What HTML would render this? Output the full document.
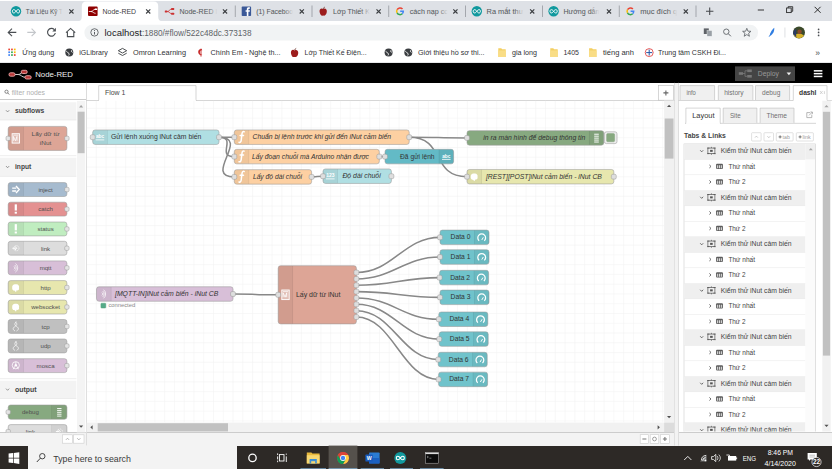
<!DOCTYPE html>
<html><head><meta charset="utf-8"><title>Node-RED</title>
<style>
html,body{margin:0;padding:0;background:#fff;}
body{width:834px;height:473px;overflow:hidden;position:relative;font-family:"Liberation Sans",sans-serif;}
#scr{position:absolute;left:0;top:0;width:831.8px;height:469.4px;overflow:hidden;background:#fff;}
.a{position:absolute;}
.t{position:absolute;white-space:nowrap;line-height:1;}
svg{position:absolute;overflow:visible;}
</style></head><body><div id="scr">

<div class="a" style="left:0;top:1px;width:100%;height:20.2px;background:#dee1e6"></div>
<div class="a" style="left:0;top:21.2px;width:100%;height:41.8px;background:#fff"></div>
<svg width="834" height="473" viewBox="0 0 834 473" font-family="Liberation Sans, sans-serif"><path d="M77.3 21.2 q4.5 0 4.5 -4.5 V6.0 q0 -4.5 4.5 -4.5 H153.7 q4.5 0 4.5 4.5 V16.7 q0 4.5 4.5 4.5 Z" fill="#fff"/><circle cx="16.0" cy="11.3" r="5.2" fill="#11999e"/><path d="M16.0 11.3 c-1.3 -2.2 -3.6 -2.2 -3.6 0 s2.3 2.2 3.6 0 s3.6 -2.2 3.6 0 s-2.3 2.2 -3.6 0" fill="none" stroke="#fff" stroke-width="1"/><linearGradient id="tf0" gradientUnits="userSpaceOnUse" x1="53.8" y1="0" x2="62.8" y2="0"><stop offset="0" stop-color="#50555a"/><stop offset="1" stop-color="#dee1e6"/></linearGradient><text x="25.8" y="14.27" font-size="7.8" fill="url(#tf0)" textLength="37" lengthAdjust="spacingAndGlyphs">Tài Liệu Kỹ T</text><path d="M69.3 9.3 l4.2 4.2 M73.49999999999999 9.3 l-4.2 4.2" stroke="#3a3d40" stroke-width="1.1" fill="none"/><rect x="88.0" y="6.500000000000001" width="9.6" height="9.6" rx="1" fill="#8f0000"/><path d="M88.8 11.5 h2.2 c2 0 2 -2.2 4.6 -2.2 M91.0 11.5 c2 0 2.2 1.8 4.6 1.8" fill="none" stroke="#fff" stroke-width="0.8"/><rect x="94.6" y="8.4" width="2.6" height="1.6" rx=".5" fill="#fff"/><text x="102.6" y="14.27" font-size="7.8" fill="#3c4043" font-weight="normal" font-style="normal" text-anchor="start" textLength="33.5" lengthAdjust="spacingAndGlyphs" >Node-RED</text><path d="M146.1 9.3 l4.2 4.2 M150.29999999999998 9.3 l-4.2 4.2" stroke="#3a3d40" stroke-width="1.1" fill="none"/><path d="M165.2 11.5 h2.2 c2 0 2 -2.4 4.6 -2.4 M167.4 11.5 c2 0 2.2 2.2 4.6 2.2" fill="none" stroke="#c33" stroke-width="0.9"/><rect x="171.2" y="8.100000000000001" width="3" height="1.9" rx=".5" fill="#c33"/><rect x="171.2" y="12.8" width="3" height="1.9" rx=".5" fill="#c33"/><rect x="164.79999999999998" y="10.5" width="2.6" height="1.9" rx=".5" fill="#c33"/><linearGradient id="tf2" gradientUnits="userSpaceOnUse" x1="208.4" y1="0" x2="217.4" y2="0"><stop offset="0" stop-color="#50555a"/><stop offset="1" stop-color="#dee1e6"/></linearGradient><text x="179.4" y="14.27" font-size="7.8" fill="url(#tf2)" textLength="38" lengthAdjust="spacingAndGlyphs">Node-RED I</text><path d="M222.9 9.3 l4.2 4.2 M227.1 9.3 l-4.2 4.2" stroke="#3a3d40" stroke-width="1.1" fill="none"/><rect x="234.85" y="5.5" width="0.7" height="11.5" fill="#8b8f94"/><rect x="241.7" y="6.6000000000000005" width="9.4" height="9.4" rx="0.8" fill="#3b5998"/><path d="M246.79999999999998 16.0 v-4.3 h-1.2 v-1.4 h1.2 v-1 c0 -1.4 .8 -2 2 -2 h1.1 v1.4 h-.8 c-.5 0 -.7 .2 -.7 .7 v.9 h1.5 l-.2 1.4 h-1.3 v4.3 z" fill="#fff"/><linearGradient id="tf3" gradientUnits="userSpaceOnUse" x1="284.2" y1="0" x2="293.2" y2="0"><stop offset="0" stop-color="#50555a"/><stop offset="1" stop-color="#dee1e6"/></linearGradient><text x="256.2" y="14.27" font-size="7.8" fill="url(#tf3)" textLength="37" lengthAdjust="spacingAndGlyphs">(1) Faceboo</text><path d="M299.69999999999993 9.3 l4.2 4.2 M303.9 9.3 l-4.2 4.2" stroke="#3a3d40" stroke-width="1.1" fill="none"/><rect x="311.65" y="5.5" width="0.7" height="11.5" fill="#8b8f94"/><path d="M323.2 9.100000000000001 c-2 -1.5 -4.2 .3 -3.6 3 c.5 2.4 1.8 4 3 3.6 c.4 -.15 .8 -.15 1.2 0 c1.4 .4 2.6 -1.4 3 -3.6 c.5 -2.8 -1.8 -4.4 -3.6 -3 z" fill="#9c1c1c"/><path d="M323.2 8.9 c.2 -1 .8 -1.6 1.6 -1.8" stroke="#5a1a10" stroke-width=".7" fill="none"/><linearGradient id="tf4" gradientUnits="userSpaceOnUse" x1="361.0" y1="0" x2="370.0" y2="0"><stop offset="0" stop-color="#50555a"/><stop offset="1" stop-color="#dee1e6"/></linearGradient><text x="333.0" y="14.27" font-size="7.8" fill="url(#tf4)" textLength="37" lengthAdjust="spacingAndGlyphs">Lớp Thiết K</text><path d="M376.5 9.3 l4.2 4.2 M380.70000000000005 9.3 l-4.2 4.2" stroke="#3a3d40" stroke-width="1.1" fill="none"/><rect x="388.45" y="5.5" width="0.7" height="11.5" fill="#8b8f94"/><g fill="none" stroke-width="1.5"><path d="M402.5 9.100000000000001 A3.3 3.3 0 0 0 397.1 9.700000000000001" stroke="#ea4335"/><path d="M397.1 9.700000000000001 A3.3 3.3 0 0 0 397.1 12.9" stroke="#fbbc05"/><path d="M397.1 12.9 A3.3 3.3 0 0 0 402.3 13.700000000000001" stroke="#34a853"/><path d="M402.3 13.700000000000001 A3.3 3.3 0 0 0 403.3 11.3 H400.2" stroke="#4285f4"/></g><linearGradient id="tf5" gradientUnits="userSpaceOnUse" x1="438.8" y1="0" x2="447.8" y2="0"><stop offset="0" stop-color="#50555a"/><stop offset="1" stop-color="#dee1e6"/></linearGradient><text x="409.8" y="14.27" font-size="7.8" fill="url(#tf5)" textLength="38" lengthAdjust="spacingAndGlyphs">cách nạp cc</text><path d="M453.29999999999995 9.3 l4.2 4.2 M457.5 9.3 l-4.2 4.2" stroke="#3a3d40" stroke-width="1.1" fill="none"/><rect x="465.25" y="5.5" width="0.7" height="11.5" fill="#8b8f94"/><circle cx="476.79999999999995" cy="11.3" r="5.2" fill="#11999e"/><path d="M476.79999999999995 11.3 c-1.3 -2.2 -3.6 -2.2 -3.6 0 s2.3 2.2 3.6 0 s3.6 -2.2 3.6 0 s-2.3 2.2 -3.6 0" fill="none" stroke="#fff" stroke-width="1"/><linearGradient id="tf6" gradientUnits="userSpaceOnUse" x1="514.5999999999999" y1="0" x2="523.5999999999999" y2="0"><stop offset="0" stop-color="#50555a"/><stop offset="1" stop-color="#dee1e6"/></linearGradient><text x="486.59999999999997" y="14.27" font-size="7.8" fill="url(#tf6)" textLength="37" lengthAdjust="spacingAndGlyphs">Ra mắt thư</text><path d="M530.0999999999999 9.3 l4.2 4.2 M534.3 9.3 l-4.2 4.2" stroke="#3a3d40" stroke-width="1.1" fill="none"/><rect x="542.05" y="5.5" width="0.7" height="11.5" fill="#8b8f94"/><circle cx="553.6" cy="11.3" r="5.2" fill="#11999e"/><path d="M553.6 11.3 c-1.3 -2.2 -3.6 -2.2 -3.6 0 s2.3 2.2 3.6 0 s3.6 -2.2 3.6 0 s-2.3 2.2 -3.6 0" fill="none" stroke="#fff" stroke-width="1"/><linearGradient id="tf7" gradientUnits="userSpaceOnUse" x1="590.4" y1="0" x2="599.4" y2="0"><stop offset="0" stop-color="#50555a"/><stop offset="1" stop-color="#dee1e6"/></linearGradient><text x="563.4" y="14.27" font-size="7.8" fill="url(#tf7)" textLength="36" lengthAdjust="spacingAndGlyphs">Hướng dẫn</text><path d="M606.9 9.3 l4.2 4.2 M611.1 9.3 l-4.2 4.2" stroke="#3a3d40" stroke-width="1.1" fill="none"/><rect x="618.8499999999999" y="5.5" width="0.7" height="11.5" fill="#8b8f94"/><g fill="none" stroke-width="1.5"><path d="M632.9 9.100000000000001 A3.3 3.3 0 0 0 627.5 9.700000000000001" stroke="#ea4335"/><path d="M627.5 9.700000000000001 A3.3 3.3 0 0 0 627.5 12.9" stroke="#fbbc05"/><path d="M627.5 12.9 A3.3 3.3 0 0 0 632.6999999999999 13.700000000000001" stroke="#34a853"/><path d="M632.6999999999999 13.700000000000001 A3.3 3.3 0 0 0 633.6999999999999 11.3 H630.6" stroke="#4285f4"/></g><linearGradient id="tf8" gradientUnits="userSpaceOnUse" x1="668.1999999999999" y1="0" x2="677.1999999999999" y2="0"><stop offset="0" stop-color="#50555a"/><stop offset="1" stop-color="#dee1e6"/></linearGradient><text x="640.1999999999999" y="14.27" font-size="7.8" fill="url(#tf8)" textLength="37" lengthAdjust="spacingAndGlyphs">mục đích q</text><path d="M683.6999999999999 9.3 l4.2 4.2 M687.9 9.3 l-4.2 4.2" stroke="#3a3d40" stroke-width="1.1" fill="none"/><rect x="695.6499999999999" y="5.5" width="0.7" height="11.5" fill="#8b8f94"/><path d="M706 11.3 h7.4 M709.7 7.6 v7.4" stroke="#45484c" stroke-width="1.05" fill="none"/><path d="M757.8 10 h6.2" stroke="#222" stroke-width="0.9"/><rect x="786.6" y="8" width="4.6" height="4.6" fill="none" stroke="#222" stroke-width="0.85"/><path d="M788.1 8 v-1.3 h4.6 v4.6 h-1.4" fill="none" stroke="#222" stroke-width="0.85"/><path d="M814.6 6.8 l6 6 M820.6 6.8 l-6 6" stroke="#222" stroke-width="0.95"/><path d="M16.3 32.4 H8.3 M12 28.599999999999998 l-3.8 3.8 l3.8 3.8" fill="none" stroke="#4a4e52" stroke-width="1.1"/><path d="M27.3 32.4 H35.3 M31.6 28.599999999999998 l3.8 3.8 l-3.8 3.8" fill="none" stroke="#c3c6ca" stroke-width="1.1"/><path d="M55.3 33.0 A3.9 3.9 0 1 1 54.3 29.599999999999998" fill="none" stroke="#4a4e52" stroke-width="1.15"/><path d="M55.9 27.799999999999997 v3.6 h-3.6 z" fill="#4a4e52"/><path d="M66 32.6 l4.6 -4.2 l4.6 4.2 M67.4 32.0 v4.6 h6.4 v-4.6" fill="none" stroke="#4a4e52" stroke-width="1.1" stroke-linejoin="miter"/><rect x="84.4" y="24.8" width="673.6" height="15.8" rx="7.9" fill="#f1f3f4"/><circle cx="94.5" cy="32.4" r="3.7" fill="none" stroke="#4a4e52" stroke-width="0.8"/><path d="M94.5 31.9 v2.6 M94.5 30.099999999999998 v0.9" stroke="#4a4e52" stroke-width="0.9"/><text x="104.5" y="35.52" font-size="8.5" fill="#202124" font-weight="normal" font-style="normal" text-anchor="start" textLength="37.5" lengthAdjust="spacingAndGlyphs" >localhost</text><text x="142" y="35.52" font-size="8.5" fill="#5f6368" font-weight="normal" font-style="normal" text-anchor="start" textLength="109.5" lengthAdjust="spacingAndGlyphs" >:1880/#flow/522c48dc.373138</text><rect x="703.8" y="28.4" width="5" height="5.6" fill="#5f6368"/><rect x="707" y="30.599999999999998" width="5" height="5.6" fill="#9aa0a6" stroke="#f1f3f4" stroke-width=".4"/><circle cx="726.3" cy="31.7" r="2.7" fill="none" stroke="#5f6368" stroke-width="0.9"/><path d="M728.3 33.699999999999996 l2.6 2.6" stroke="#5f6368" stroke-width="1"/><polygon points="746.80,28.30 747.92,31.16 750.98,31.34 748.61,33.29 749.39,36.26 746.80,34.60 744.21,36.26 744.99,33.29 742.62,31.34 745.68,31.16" fill="none" stroke="#5f6368" stroke-width="0.85"/><path d="M769.5 35.8 c1 -4 3 -6.5 4.8 -8 c.2 3.5 -1.3 6.3 -3.4 7.6 z" fill="#2f7de1"/><path d="M769 36.9 l2.5 -4" stroke="#2f7de1" stroke-width=".7"/><rect x="784.6" y="27.5" width="0.7" height="10" fill="#d0d3d7"/><circle cx="799" cy="32.4" r="6" fill="#3c4a2a"/><path d="M794 35.6 a6 6 0 0 0 10 0 q-5 -4 -10 0z" fill="#d8b32a"/><circle cx="799.6" cy="31.799999999999997" r="2.2" fill="#8a4a2a"/><path d="M793.2 33.4 a6 6 0 0 1 3 -5 v9 z" fill="#2a3a66"/><circle cx="818.6" cy="29.4" r="0.85" fill="#4a4e52"/><circle cx="818.6" cy="32.4" r="0.85" fill="#4a4e52"/><circle cx="818.6" cy="35.4" r="0.85" fill="#4a4e52"/><rect x="8.3" y="48.6" width="1.7" height="1.7" fill="#ea4335"/><rect x="11.100000000000001" y="48.6" width="1.7" height="1.7" fill="#ea4335"/><rect x="13.9" y="48.6" width="1.7" height="1.7" fill="#fbbc05"/><rect x="8.3" y="51.4" width="1.7" height="1.7" fill="#4285f4"/><rect x="11.100000000000001" y="51.4" width="1.7" height="1.7" fill="#34a853"/><rect x="13.9" y="51.4" width="1.7" height="1.7" fill="#fbbc05"/><rect x="8.3" y="54.2" width="1.7" height="1.7" fill="#4285f4"/><rect x="11.100000000000001" y="54.2" width="1.7" height="1.7" fill="#34a853"/><rect x="13.9" y="54.2" width="1.7" height="1.7" fill="#ea4335"/><text x="22.2" y="55.37" font-size="7.8" fill="#2f3235" font-weight="normal" font-style="normal" text-anchor="start" textLength="32" lengthAdjust="spacingAndGlyphs" >Ứng dụng</text><circle cx="69.3" cy="52.6" r="4" fill="#3a3d40"/><path d="M66.3 51.2 c1.5 .6 1.2 1.8 2.2 2 c1 .2 .8 1.4 .2 2.2 M71.89999999999999 50.2 c-1 .8 -.4 1.8 .6 2.2" fill="none" stroke="#fff" stroke-width=".9"/><text x="79.3" y="55.37" font-size="7.8" fill="#2f3235" font-weight="normal" font-style="normal" text-anchor="start" textLength="28.5" lengthAdjust="spacingAndGlyphs" >iGLibrary</text><path d="M122.5 48.4 l4.2 2.3 l-4.2 2.3 l-4.2 -2.3 z" fill="none" stroke="#3a3d40" stroke-width=".9"/><path d="M118.3 53.2 l4.2 2.3 l4.2 -2.3" fill="none" stroke="#3a3d40" stroke-width=".9"/><text x="133" y="55.37" font-size="7.8" fill="#2f3235" font-weight="normal" font-style="normal" text-anchor="start" textLength="53" lengthAdjust="spacingAndGlyphs" >Omron Learning</text><path d="M201.5 49.0 c-3.2 -.2 -4 3 -2.6 5 c1 1.4 2.6 1.6 3.4 .8 c-1.6 0 -2.6 -1.2 -2.4 -2.8 c.2 -1.4 1.2 -2 2.4 -1.8 z" fill="#c62828"/><path d="M201 48.6 v8" stroke="#c62828" stroke-width=".9"/><text x="210.5" y="55.37" font-size="7.8" fill="#2f3235" font-weight="normal" font-style="normal" text-anchor="start" textLength="70" lengthAdjust="spacingAndGlyphs" >Chính Em - Nghệ th...</text><path d="M294.6 50.4 c-2 -1.5 -4.2 .3 -3.6 3 c.5 2.4 1.8 4 3 3.6 c.4 -.15 .8 -.15 1.2 0 c1.4 .4 2.6 -1.4 3 -3.6 c.5 -2.8 -1.8 -4.4 -3.6 -3 z" fill="#9c1c1c"/><path d="M294.6 50.2 c.2 -1 .8 -1.6 1.6 -1.8" stroke="#5a1a10" stroke-width=".7" fill="none"/><text x="304.6" y="55.37" font-size="7.8" fill="#2f3235" font-weight="normal" font-style="normal" text-anchor="start" textLength="62" lengthAdjust="spacingAndGlyphs" >Lớp Thiết Kế Điện...</text><circle cx="388.6" cy="52.6" r="4" fill="#3a3d40"/><path d="M385.6 51.2 c1.5 .6 1.2 1.8 2.2 2 c1 .2 .8 1.4 .2 2.2 M391.20000000000005 50.2 c-1 .8 -.4 1.8 .6 2.2" fill="none" stroke="#fff" stroke-width=".9"/><circle cx="408.3" cy="52.6" r="4" fill="#3a3d40"/><path d="M405.3 51.2 c1.5 .6 1.2 1.8 2.2 2 c1 .2 .8 1.4 .2 2.2 M410.90000000000003 50.2 c-1 .8 -.4 1.8 .6 2.2" fill="none" stroke="#fff" stroke-width=".9"/><text x="418" y="55.37" font-size="7.8" fill="#2f3235" font-weight="normal" font-style="normal" text-anchor="start" textLength="66.5" lengthAdjust="spacingAndGlyphs" >Giới thiệu hồ sơ thi...</text><path d="M498.3 48.2 h3 l.8 1 h3.6 v7.8 h-7.4 z" fill="#f3cf63"/><rect x="498.3" y="50.4" width="7.4" height="6.6" fill="#f9dd86"/><text x="512" y="55.37" font-size="7.8" fill="#2f3235" font-weight="normal" font-style="normal" text-anchor="start" textLength="25" lengthAdjust="spacingAndGlyphs" >gia long</text><path d="M550.3 48.2 h3 l.8 1 h3.6 v7.8 h-7.4 z" fill="#f3cf63"/><rect x="550.3" y="50.4" width="7.4" height="6.6" fill="#f9dd86"/><text x="563.5" y="55.37" font-size="7.8" fill="#2f3235" font-weight="normal" font-style="normal" text-anchor="start" textLength="15.5" lengthAdjust="spacingAndGlyphs" >1405</text><path d="M589.0999999999999 48.2 h3 l.8 1 h3.6 v7.8 h-7.4 z" fill="#f3cf63"/><rect x="589.0999999999999" y="50.4" width="7.4" height="6.6" fill="#f9dd86"/><text x="603" y="55.37" font-size="7.8" fill="#2f3235" font-weight="normal" font-style="normal" text-anchor="start" textLength="31" lengthAdjust="spacingAndGlyphs" >tiếng anh</text><circle cx="649.2" cy="52.6" r="4" fill="#fff" stroke="#d33" stroke-width=".8"/><path d="M649.2 49.6 v6 M646.2 52.6 h6" stroke="#2456a6" stroke-width="1"/><text x="658" y="55.37" font-size="7.8" fill="#2f3235" font-weight="normal" font-style="normal" text-anchor="start" textLength="68" lengthAdjust="spacingAndGlyphs" >Trung tâm CSKH Đi...</text><text x="815.3" y="55.62" font-size="8.5" fill="#4a4e52" font-weight="normal" font-style="normal" text-anchor="start" >»</text><rect x="0" y="62.4" width="834" height="0.6" fill="#d5d8dc"/></svg>
<div class="a" style="left:0px;top:63.0px;width:831.8px;height:19.8px;background:#000;"></div>
<div class="a" style="left:0px;top:82.8px;width:831.8px;height:362.8px;background:#fff;"></div>
<div class="a" style="left:674.4px;top:82.8px;width:4.2px;height:362.8px;background:#f3f3f3;"></div>
<div class="a" style="left:0px;top:82.8px;width:86.4px;height:17.5px;background:#fff;border-bottom:0.6px solid #ccc;box-sizing:border-box"></div>
<div class="a" style="left:86.4px;top:82.8px;width:588.0px;height:17.5px;background:#fff;"></div>
<div class="a" style="left:0px;top:432.2px;width:86.4px;height:13.4px;background:#f3f3f3;border-top:0.6px solid #ccc;box-sizing:border-box"></div>
<div class="a" style="left:86.7px;top:432.2px;width:587.4px;height:13.4px;background:#f3f3f3;border-top:0.6px solid #ccc;box-sizing:border-box"></div>
<svg width="834" height="473" viewBox="0 0 834 473" font-family="Liberation Sans, sans-serif"><rect x="674.1" y="82.8" width="0.6" height="362.8" fill="#d4d4d4"/><rect x="678.3000000000001" y="82.8" width="0.6" height="362.8" fill="#d0d0d0"/><path d="M15 74.5 h3.2 c3 0 2.6 -2.6 6 -2.6 M18.2 74.5 c3 0 3.4 2.8 7 2.8" fill="none" stroke="#ccc" stroke-width="1"/><rect x="9" y="72.8" width="6" height="3.4" rx="1.5" fill="#b53535" stroke="#eaa8a8" stroke-width="0.9"/><rect x="21.2" y="70.3" width="6" height="3.2" rx="1.5" fill="#b53535" stroke="#eaa8a8" stroke-width="0.9"/><rect x="25" y="75.7" width="6.2" height="3.3" rx="1.5" fill="#b53535" stroke="#eaa8a8" stroke-width="0.9"/><text x="35.2" y="77.24" font-size="8" fill="#eee" font-weight="normal" font-style="normal" text-anchor="start" textLength="37.8" lengthAdjust="spacingAndGlyphs" >Node-RED</text><rect x="735" y="66.4" width="60" height="14.6" fill="#444"/><rect x="738.8" y="72.2" width="4.2" height="2.6" fill="#777"/><rect x="747.2" y="69.5" width="4.6" height="2.6" fill="#777"/><rect x="747.2" y="75" width="4.6" height="2.6" fill="#777"/><path d="M743 73.5 h2 v-2.7 h2.2 M745 73.5 v2.8 h2.2" fill="none" stroke="#777" stroke-width=".8"/><text x="757.8" y="76.35" font-size="6.9" fill="#999" font-weight="normal" font-style="normal" text-anchor="start" textLength="21" lengthAdjust="spacingAndGlyphs" >Deploy</text><path d="M786.6 72.6 h4.6 l-2.3 2.6 z" fill="#eee"/><rect x="813.8" y="70.1" width="8.6" height="1.5" fill="#fff"/><rect x="813.8" y="72.9" width="8.6" height="1.5" fill="#fff"/><rect x="813.8" y="75.7" width="8.6" height="1.5" fill="#fff"/><circle cx="6.5" cy="91.7" r="1.6" fill="none" stroke="#777" stroke-width=".9"/><path d="M7.6 92.9 l1.6 1.6" stroke="#777" stroke-width="1"/><text x="11.7" y="94.94" font-size="6.6" fill="#b0b0b0" font-weight="normal" font-style="normal" text-anchor="start" textLength="33.3" lengthAdjust="spacingAndGlyphs" >filter nodes</text><rect x="86.10000000000001" y="82.8" width="0.6" height="362.8" fill="#c4c4c4"/><rect x="86.4" y="100.0" width="588.0" height="0.6" fill="#bbb"/><path d="M98.7 100.7 V85.6 H196 V100.7" fill="#fff" stroke="#bbb" stroke-width="0.6"/><rect x="99" y="99.8" width="96.7" height="1.2" fill="#fff"/><text x="104.9" y="94.75" font-size="6.9" fill="#484848" font-weight="normal" font-style="normal" text-anchor="start" textLength="20.5" lengthAdjust="spacingAndGlyphs" >Flow 1</text><rect x="658.3" y="85.6" width="15.2" height="14.6" fill="#fff" stroke="#bbb" stroke-width="0.6"/><path d="M663.4 92.9 h5 M665.9 90.4 v5" stroke="#666" stroke-width="1.1"/><rect x="62.4" y="434.8" width="10.199999999999996" height="8.399999999999977" fill="#fff" stroke="#ccc" stroke-width="0.6"/><rect x="73.6" y="434.8" width="10.400000000000006" height="8.399999999999977" fill="#fff" stroke="#ccc" stroke-width="0.6"/><path d="M65.9 439.9 l1.6 -1.7 l1.6 1.7" fill="none" stroke="#999" stroke-width=".7"/><path d="M77.2 438.2 l1.6 1.7 l1.6 -1.7" fill="none" stroke="#999" stroke-width=".7"/><rect x="640.2" y="434.7" width="8.399999999999977" height="8.600000000000023" fill="#fff" stroke="#ccc" stroke-width="0.6"/><rect x="650.2" y="434.7" width="8.599999999999909" height="8.600000000000023" fill="#fff" stroke="#ccc" stroke-width="0.6"/><rect x="660.5" y="434.7" width="8.799999999999955" height="8.600000000000023" fill="#fff" stroke="#ccc" stroke-width="0.6"/><path d="M642.4 439 h4" stroke="#777" stroke-width="1"/><circle cx="654.5" cy="439" r="1.9" fill="none" stroke="#777" stroke-width=".7"/><path d="M662.9 439 h4 M664.9 437 v4" stroke="#777" stroke-width="1.1"/></svg>
<svg width="834" height="473" viewBox="0 0 834 473" font-family="Liberation Sans, sans-serif"><clipPath id="cp12"><rect x="86.7" y="100.6" width="577.4" height="322.0"/></clipPath><g clip-path="url(#cp12)"><path d="M96.30 100.6 V422.6 M106.07 100.6 V422.6 M115.83 100.6 V422.6 M125.60 100.6 V422.6 M135.36 100.6 V422.6 M145.13 100.6 V422.6 M154.90 100.6 V422.6 M164.66 100.6 V422.6 M174.43 100.6 V422.6 M184.19 100.6 V422.6 M193.96 100.6 V422.6 M203.73 100.6 V422.6 M213.49 100.6 V422.6 M223.26 100.6 V422.6 M233.02 100.6 V422.6 M242.79 100.6 V422.6 M252.56 100.6 V422.6 M262.32 100.6 V422.6 M272.09 100.6 V422.6 M281.85 100.6 V422.6 M291.62 100.6 V422.6 M301.39 100.6 V422.6 M311.15 100.6 V422.6 M320.92 100.6 V422.6 M330.68 100.6 V422.6 M340.45 100.6 V422.6 M350.22 100.6 V422.6 M359.98 100.6 V422.6 M369.75 100.6 V422.6 M379.51 100.6 V422.6 M389.28 100.6 V422.6 M399.05 100.6 V422.6 M408.81 100.6 V422.6 M418.58 100.6 V422.6 M428.34 100.6 V422.6 M438.11 100.6 V422.6 M447.88 100.6 V422.6 M457.64 100.6 V422.6 M467.41 100.6 V422.6 M477.17 100.6 V422.6 M486.94 100.6 V422.6 M496.71 100.6 V422.6 M506.47 100.6 V422.6 M516.24 100.6 V422.6 M526.00 100.6 V422.6 M535.77 100.6 V422.6 M545.54 100.6 V422.6 M555.30 100.6 V422.6 M565.07 100.6 V422.6 M574.83 100.6 V422.6 M584.60 100.6 V422.6 M594.37 100.6 V422.6 M604.13 100.6 V422.6 M613.90 100.6 V422.6 M623.66 100.6 V422.6 M633.43 100.6 V422.6 M643.20 100.6 V422.6 M652.96 100.6 V422.6 M662.73 100.6 V422.6 M86.7 108.40 H664.1 M86.7 118.17 H664.1 M86.7 127.93 H664.1 M86.7 137.70 H664.1 M86.7 147.46 H664.1 M86.7 157.23 H664.1 M86.7 167.00 H664.1 M86.7 176.76 H664.1 M86.7 186.53 H664.1 M86.7 196.29 H664.1 M86.7 206.06 H664.1 M86.7 215.83 H664.1 M86.7 225.59 H664.1 M86.7 235.36 H664.1 M86.7 245.12 H664.1 M86.7 254.89 H664.1 M86.7 264.66 H664.1 M86.7 274.42 H664.1 M86.7 284.19 H664.1 M86.7 293.95 H664.1 M86.7 303.72 H664.1 M86.7 313.49 H664.1 M86.7 323.25 H664.1 M86.7 333.02 H664.1 M86.7 342.78 H664.1 M86.7 352.55 H664.1 M86.7 362.32 H664.1 M86.7 372.08 H664.1 M86.7 381.85 H664.1 M86.7 391.61 H664.1 M86.7 401.38 H664.1 M86.7 411.15 H664.1 M86.7 420.91 H664.1" stroke="#f2f2f2" stroke-width="0.55" fill="none"/><path d="M219.00 137.20 C230.47 137.20 222.83 137.20 234.30 137.20" fill="none" stroke="#fff" stroke-width="2.4"/><path d="M219.00 137.20 C237.53 137.20 215.77 156.60 234.30 156.60" fill="none" stroke="#fff" stroke-width="2.4"/><path d="M219.00 137.20 C250.91 137.20 202.39 176.90 234.30 176.90" fill="none" stroke="#fff" stroke-width="2.4"/><path d="M409.20 137.20 C445.82 137.20 430.38 137.90 467.00 137.90" fill="none" stroke="#fff" stroke-width="2.4"/><path d="M409.20 137.20 C445.82 137.20 430.38 176.70 467.00 176.70" fill="none" stroke="#fff" stroke-width="2.4"/><path d="M379.30 156.60 C383.57 156.60 380.73 156.60 385.00 156.60" fill="none" stroke="#fff" stroke-width="2.4"/><path d="M311.60 176.90 C320.17 176.90 314.43 176.20 323.00 176.20" fill="none" stroke="#fff" stroke-width="2.4"/><path d="M233.00 294.00 C266.91 294.00 244.29 294.80 278.20 294.80" fill="none" stroke="#fff" stroke-width="2.4"/><path d="M356.40 272.57 C393.02 272.57 403.38 237.35 440.00 237.35" fill="none" stroke="#fff" stroke-width="2.4"/><path d="M356.40 278.92 C393.02 278.92 403.38 257.00 440.00 257.00" fill="none" stroke="#fff" stroke-width="2.4"/><path d="M356.40 285.27 C393.02 285.27 402.98 277.60 439.60 277.60" fill="none" stroke="#fff" stroke-width="2.4"/><path d="M356.40 291.62 C393.02 291.62 403.38 297.35 440.00 297.35" fill="none" stroke="#fff" stroke-width="2.4"/><path d="M356.40 297.97 C393.02 297.97 402.18 319.25 438.80 319.25" fill="none" stroke="#fff" stroke-width="2.4"/><path d="M356.40 304.32 C393.02 304.32 402.58 339.10 439.20 339.10" fill="none" stroke="#fff" stroke-width="2.4"/><path d="M356.40 310.67 C393.02 310.67 401.58 359.55 438.20 359.55" fill="none" stroke="#fff" stroke-width="2.4"/><path d="M356.40 317.02 C393.02 317.02 401.98 379.40 438.60 379.40" fill="none" stroke="#fff" stroke-width="2.4"/><path d="M219.00 137.20 C230.47 137.20 222.83 137.20 234.30 137.20" fill="none" stroke="#888" stroke-width="1.55"/><path d="M219.00 137.20 C237.53 137.20 215.77 156.60 234.30 156.60" fill="none" stroke="#888" stroke-width="1.55"/><path d="M219.00 137.20 C250.91 137.20 202.39 176.90 234.30 176.90" fill="none" stroke="#888" stroke-width="1.55"/><path d="M409.20 137.20 C445.82 137.20 430.38 137.90 467.00 137.90" fill="none" stroke="#888" stroke-width="1.55"/><path d="M409.20 137.20 C445.82 137.20 430.38 176.70 467.00 176.70" fill="none" stroke="#888" stroke-width="1.55"/><path d="M379.30 156.60 C383.57 156.60 380.73 156.60 385.00 156.60" fill="none" stroke="#888" stroke-width="1.55"/><path d="M311.60 176.90 C320.17 176.90 314.43 176.20 323.00 176.20" fill="none" stroke="#888" stroke-width="1.55"/><path d="M233.00 294.00 C266.91 294.00 244.29 294.80 278.20 294.80" fill="none" stroke="#888" stroke-width="1.55"/><path d="M356.40 272.57 C393.02 272.57 403.38 237.35 440.00 237.35" fill="none" stroke="#888" stroke-width="1.55"/><path d="M356.40 278.92 C393.02 278.92 403.38 257.00 440.00 257.00" fill="none" stroke="#888" stroke-width="1.55"/><path d="M356.40 285.27 C393.02 285.27 402.98 277.60 439.60 277.60" fill="none" stroke="#888" stroke-width="1.55"/><path d="M356.40 291.62 C393.02 291.62 403.38 297.35 440.00 297.35" fill="none" stroke="#888" stroke-width="1.55"/><path d="M356.40 297.97 C393.02 297.97 402.18 319.25 438.80 319.25" fill="none" stroke="#888" stroke-width="1.55"/><path d="M356.40 304.32 C393.02 304.32 402.58 339.10 439.20 339.10" fill="none" stroke="#888" stroke-width="1.55"/><path d="M356.40 310.67 C393.02 310.67 401.58 359.55 438.20 359.55" fill="none" stroke="#888" stroke-width="1.55"/><path d="M356.40 317.02 C393.02 317.02 401.98 379.40 438.60 379.40" fill="none" stroke="#888" stroke-width="1.55"/><rect x="92.7" y="129.95" width="126.3" height="14.5" rx="2.4" fill="#b0dfe3" stroke="#999" stroke-width="0.55"/><path d="M95.10000000000001 130.25 h12.2 v13.9 h-12.2 a2.4 2.4 0 0 1 -2.4 -2.4 v-9.1 a2.4 2.4 0 0 1 2.4 -2.4 z" fill="#000" opacity=".05"/><rect x="107.05" y="130.25" width="0.5" height="13.9" fill="#000" opacity=".12"/><text x="100.0" y="138.39999999999998" font-size="5" font-weight="bold" fill="#fff" text-anchor="middle" textLength="8.2" lengthAdjust="spacingAndGlyphs">abc</text><rect x="95.7" y="139.5" width="8.6" height="0.8" fill="#fff"/><text x="111" y="139.22" font-size="7.1" fill="#333" font-weight="normal" font-style="normal" text-anchor="start" textLength="90.3" lengthAdjust="spacingAndGlyphs" >Gửi lệnh xuống iNut cảm biến</text><rect x="90.25" y="134.75" width="4.9" height="4.9" rx="1.5" fill="#dedede" stroke="#999" stroke-width="0.5"/><rect x="216.55" y="134.75" width="4.9" height="4.9" rx="1.5" fill="#dedede" stroke="#999" stroke-width="0.5"/><rect x="234.3" y="129.95" width="174.9" height="14.5" rx="2.4" fill="#fdd0a2" stroke="#999" stroke-width="0.55"/><path d="M236.70000000000002 130.25 h12.2 v13.9 h-12.2 a2.4 2.4 0 0 1 -2.4 -2.4 v-9.1 a2.4 2.4 0 0 1 2.4 -2.4 z" fill="#000" opacity=".05"/><rect x="248.65" y="130.25" width="0.5" height="13.9" fill="#000" opacity=".12"/><path d="M239.00000000000003 142.29999999999998 c1.3 .5 2 -.5 2.2 -2 l.8 -6.6 c.2 -1.5 .9 -2.5 2.2 -2 M240.10000000000002 135.6 h3.4" fill="none" stroke="#fff" stroke-width="1.5" stroke-linecap="round"/><text x="252.5" y="139.22" font-size="7.1" fill="#333" font-weight="normal" font-style="italic" text-anchor="start" textLength="138.6" lengthAdjust="spacingAndGlyphs" >Chuẩn bị lệnh trước khi gửi đến iNut cảm biến</text><rect x="231.85" y="134.75" width="4.9" height="4.9" rx="1.5" fill="#dedede" stroke="#999" stroke-width="0.5"/><rect x="406.75" y="134.75" width="4.9" height="4.9" rx="1.5" fill="#dedede" stroke="#999" stroke-width="0.5"/><rect x="234.3" y="149.35" width="145.0" height="14.5" rx="2.4" fill="#fdd0a2" stroke="#999" stroke-width="0.55"/><path d="M236.70000000000002 149.65 h12.2 v13.9 h-12.2 a2.4 2.4 0 0 1 -2.4 -2.4 v-9.1 a2.4 2.4 0 0 1 2.4 -2.4 z" fill="#000" opacity=".05"/><rect x="248.65" y="149.65" width="0.5" height="13.9" fill="#000" opacity=".12"/><path d="M239.00000000000003 161.7 c1.3 .5 2 -.5 2.2 -2 l.8 -6.6 c.2 -1.5 .9 -2.5 2.2 -2 M240.10000000000002 155.0 h3.4" fill="none" stroke="#fff" stroke-width="1.5" stroke-linecap="round"/><text x="251.9" y="158.62" font-size="7.1" fill="#333" font-weight="normal" font-style="italic" text-anchor="start" textLength="117" lengthAdjust="spacingAndGlyphs" >Lấy đoạn chuỗi mà Arduino nhận được</text><rect x="231.85" y="154.15" width="4.9" height="4.9" rx="1.5" fill="#dedede" stroke="#999" stroke-width="0.5"/><rect x="376.85" y="154.15" width="4.9" height="4.9" rx="1.5" fill="#dedede" stroke="#999" stroke-width="0.5"/><rect x="234.3" y="169.65" width="77.3" height="14.5" rx="2.4" fill="#fdd0a2" stroke="#999" stroke-width="0.55"/><path d="M236.70000000000002 169.95000000000002 h12.2 v13.9 h-12.2 a2.4 2.4 0 0 1 -2.4 -2.4 v-9.1 a2.4 2.4 0 0 1 2.4 -2.4 z" fill="#000" opacity=".05"/><rect x="248.65" y="169.95000000000002" width="0.5" height="13.9" fill="#000" opacity=".12"/><path d="M239.00000000000003 182.0 c1.3 .5 2 -.5 2.2 -2 l.8 -6.6 c.2 -1.5 .9 -2.5 2.2 -2 M240.10000000000002 175.3 h3.4" fill="none" stroke="#fff" stroke-width="1.5" stroke-linecap="round"/><text x="252.9" y="178.92" font-size="7.1" fill="#333" font-weight="normal" font-style="italic" text-anchor="start" textLength="49" lengthAdjust="spacingAndGlyphs" >Lấy độ dài chuỗi</text><rect x="231.85" y="174.45" width="4.9" height="4.9" rx="1.5" fill="#dedede" stroke="#999" stroke-width="0.5"/><rect x="309.15" y="174.45" width="4.9" height="4.9" rx="1.5" fill="#dedede" stroke="#999" stroke-width="0.5"/><rect x="385" y="149.35" width="68.6" height="14.5" rx="2.4" fill="#63bac6" stroke="#999" stroke-width="0.55"/><path d="M439.0 149.65 h12.2 a2.4 2.4 0 0 1 2.4 2.4 v9.1 a2.4 2.4 0 0 1 -2.4 2.4 h-12.2 z" fill="#000" opacity=".05"/><rect x="438.75" y="149.65" width="0.5" height="13.9" fill="#000" opacity=".12"/><text x="446.3" y="157.79999999999998" font-size="5" font-weight="bold" fill="#fff" text-anchor="middle" textLength="8.2" lengthAdjust="spacingAndGlyphs">abc</text><rect x="442.0" y="158.9" width="8.6" height="0.8" fill="#fff"/><text x="434.6" y="158.62" font-size="7.1" fill="#333" font-weight="normal" font-style="normal" text-anchor="end" textLength="34.6" lengthAdjust="spacingAndGlyphs" >Đã gửi lệnh</text><rect x="382.55" y="154.15" width="4.9" height="4.9" rx="1.5" fill="#dedede" stroke="#999" stroke-width="0.5"/><rect x="323" y="168.95" width="68.4" height="14.5" rx="2.4" fill="#b0dfe3" stroke="#999" stroke-width="0.55"/><path d="M325.4 169.25 h12.2 v13.9 h-12.2 a2.4 2.4 0 0 1 -2.4 -2.4 v-9.1 a2.4 2.4 0 0 1 2.4 -2.4 z" fill="#000" opacity=".05"/><rect x="337.35" y="169.25" width="0.5" height="13.9" fill="#000" opacity=".12"/><text x="330.3" y="177.39999999999998" font-size="5" font-weight="bold" fill="#fff" text-anchor="middle" textLength="8.2" lengthAdjust="spacingAndGlyphs">123</text><rect x="326.0" y="178.5" width="8.6" height="0.8" fill="#fff"/><text x="342.4" y="178.22" font-size="7.1" fill="#333" font-weight="normal" font-style="italic" text-anchor="start" textLength="38.3" lengthAdjust="spacingAndGlyphs" >Độ dài chuỗi</text><rect x="320.55" y="173.75" width="4.9" height="4.9" rx="1.5" fill="#dedede" stroke="#999" stroke-width="0.5"/><rect x="388.95" y="173.75" width="4.9" height="4.9" rx="1.5" fill="#dedede" stroke="#999" stroke-width="0.5"/><rect x="467" y="130.65" width="136.8" height="14.5" rx="2.4" fill="#87a980" stroke="#999" stroke-width="0.55"/><path d="M589.1999999999999 130.95000000000002 h12.2 a2.4 2.4 0 0 1 2.4 2.4 v9.1 a2.4 2.4 0 0 1 -2.4 2.4 h-12.2 z" fill="#000" opacity=".05"/><rect x="588.9499999999999" y="130.95000000000002" width="0.5" height="13.9" fill="#000" opacity=".12"/><rect x="594.2" y="133.70000000000002" width="4.6" height="1.05" fill="#fff" opacity=".9"/><rect x="594.2" y="135.65" width="4.6" height="1.05" fill="#fff" opacity=".9"/><rect x="594.2" y="137.60000000000002" width="4.6" height="1.05" fill="#fff" opacity=".9"/><rect x="594.2" y="139.55" width="4.6" height="1.05" fill="#fff" opacity=".9"/><rect x="594.2" y="141.50000000000003" width="4.6" height="1.05" fill="#fff" opacity=".9"/><text x="585.3" y="139.92" font-size="7.1" fill="#333" font-weight="normal" font-style="italic" text-anchor="end" textLength="102" lengthAdjust="spacingAndGlyphs" >in ra màn hình để debug thông tin</text><rect x="464.55" y="135.45" width="4.9" height="4.9" rx="1.5" fill="#dedede" stroke="#999" stroke-width="0.5"/><rect x="604.4" y="131.8" width="12.6" height="11.8" rx="2" fill="#eee" stroke="#999" stroke-width=".55"/><rect x="606.6" y="133.6" width="8" height="8.2" rx="1.2" fill="#87a980" stroke="#7a9a74" stroke-width=".4"/><rect x="467" y="169.45" width="146.8" height="14.5" rx="2.4" fill="#e7e7ae" stroke="#999" stroke-width="0.55"/><path d="M469.4 169.75 h12.2 v13.9 h-12.2 a2.4 2.4 0 0 1 -2.4 -2.4 v-9.1 a2.4 2.4 0 0 1 2.4 -2.4 z" fill="#000" opacity=".05"/><rect x="481.35" y="169.75" width="0.5" height="13.9" fill="#000" opacity=".12"/><path d="M470.7 177.1 c-.4 -2.6 1.6 -4 3.4 -3.6 c2.4 -.6 4.2 1.6 3.4 3.6 c.6 1.8 -1 3 -2.4 2.4 l-.6 1.8 l-1.6 -1.6 c-1.4 .2 -2.4 -1 -2.2 -2.6 z" fill="#fff"/><text x="485.9" y="178.72" font-size="7.1" fill="#333" font-weight="normal" font-style="italic" text-anchor="start" textLength="116" lengthAdjust="spacingAndGlyphs" >[REST][POST]iNut cảm biến - iNut CB</text><rect x="464.55" y="174.25" width="4.9" height="4.9" rx="1.5" fill="#dedede" stroke="#999" stroke-width="0.5"/><rect x="611.35" y="174.25" width="4.9" height="4.9" rx="1.5" fill="#dedede" stroke="#999" stroke-width="0.5"/><rect x="96.5" y="286.75" width="136.5" height="14.5" rx="2.4" fill="#d8bfd8" stroke="#999" stroke-width="0.55"/><path d="M98.9 287.05 h12.2 v13.9 h-12.2 a2.4 2.4 0 0 1 -2.4 -2.4 v-9.1 a2.4 2.4 0 0 1 2.4 -2.4 z" fill="#000" opacity=".05"/><rect x="110.85" y="287.05" width="0.5" height="13.9" fill="#000" opacity=".12"/><path d="M101.92 292.56 a1.6 1.7600000000000002 0 0 1 0 2.8800000000000003" fill="none" stroke="#fff" stroke-width=".8" opacity=".95"/><path d="M102.74 291.12 a3.2 3.5200000000000005 0 0 1 0 5.760000000000001" fill="none" stroke="#fff" stroke-width=".8" opacity=".95"/><path d="M103.56 289.68 a4.8 5.28 0 0 1 0 8.64" fill="none" stroke="#fff" stroke-width=".8" opacity=".95"/><text x="115" y="296.02" font-size="7.1" fill="#333" font-weight="normal" font-style="italic" text-anchor="start" textLength="103.3" lengthAdjust="spacingAndGlyphs" >[MQTT-IN]iNut cảm biến - iNut CB</text><rect x="230.55" y="291.55" width="4.9" height="4.9" rx="1.5" fill="#dedede" stroke="#999" stroke-width="0.5"/><rect x="100.9" y="303.2" width="4.9" height="4.9" rx="0.8" fill="#5a8" stroke="#4a9a70" stroke-width=".4"/><text x="108.4" y="307.44" font-size="4.9" fill="#888" font-weight="normal" font-style="normal" text-anchor="start" textLength="26.8" lengthAdjust="spacingAndGlyphs" >connected</text><rect x="278.2" y="265.7" width="78.2" height="58.2" rx="2.4" fill="#dda596" stroke="#999" stroke-width="0.55"/><path d="M280.59999999999997 266.0 h12.2 v57.6 h-12.2 a2.4 2.4 0 0 1 -2.4 -2.4 v-52.8 a2.4 2.4 0 0 1 2.4 -2.4 z" fill="#000" opacity=".05"/><rect x="292.55" y="266.0" width="0.5" height="57.6" fill="#000" opacity=".12"/><rect x="281.8" y="289.99999999999994" width="7.4" height="9.6" fill="#fff" fill-opacity=".35" stroke="#fff" stroke-width=".9"/><path d="M283.1 297.19999999999993 v-4.4 l2 4.4 l1.6 -4.4 v4.4" fill="none" stroke="#fff" stroke-width=".8"/><path d="M283.0 291.59999999999997 h5" stroke="#fff" stroke-width=".7"/><text x="295.9" y="296.82" font-size="7.1" fill="#333" font-weight="normal" font-style="normal" text-anchor="start" textLength="44.5" lengthAdjust="spacingAndGlyphs" >Lấy dữ từ iNut</text><rect x="275.75" y="292.35" width="4.9" height="4.9" rx="1.5" fill="#dedede" stroke="#999" stroke-width="0.5"/><rect x="353.95" y="270.12" width="4.9" height="4.9" rx="1.5" fill="#dedede" stroke="#999" stroke-width="0.5"/><rect x="353.95" y="276.47" width="4.9" height="4.9" rx="1.5" fill="#dedede" stroke="#999" stroke-width="0.5"/><rect x="353.95" y="282.82" width="4.9" height="4.9" rx="1.5" fill="#dedede" stroke="#999" stroke-width="0.5"/><rect x="353.95" y="289.17" width="4.9" height="4.9" rx="1.5" fill="#dedede" stroke="#999" stroke-width="0.5"/><rect x="353.95" y="295.52" width="4.9" height="4.9" rx="1.5" fill="#dedede" stroke="#999" stroke-width="0.5"/><rect x="353.95" y="301.87" width="4.9" height="4.9" rx="1.5" fill="#dedede" stroke="#999" stroke-width="0.5"/><rect x="353.95" y="308.22" width="4.9" height="4.9" rx="1.5" fill="#dedede" stroke="#999" stroke-width="0.5"/><rect x="353.95" y="314.57" width="4.9" height="4.9" rx="1.5" fill="#dedede" stroke="#999" stroke-width="0.5"/><rect x="440" y="230.1" width="49" height="14.5" rx="2.4" fill="#70c3cb" stroke="#999" stroke-width="0.55"/><path d="M474.4 230.4 h12.2 a2.4 2.4 0 0 1 2.4 2.4 v9.1 a2.4 2.4 0 0 1 -2.4 2.4 h-12.2 z" fill="#000" opacity=".05"/><rect x="474.15" y="230.4" width="0.5" height="13.9" fill="#000" opacity=".12"/><path d="M479.09999999999997 240.75 a3.9 3.9 0 1 1 5.2 0" fill="none" stroke="#fff" stroke-width="1.25"/><path d="M481.8 239.95 l1.5 -2.6" stroke="#fff" stroke-width="1"/><text x="470.4" y="239.37" font-size="7.1" fill="#333" font-weight="normal" font-style="normal" text-anchor="end" textLength="19.8" lengthAdjust="spacingAndGlyphs" >Data 0</text><rect x="437.55" y="234.90" width="4.9" height="4.9" rx="1.5" fill="#dedede" stroke="#999" stroke-width="0.5"/><rect x="440" y="249.75" width="49" height="14.5" rx="2.4" fill="#70c3cb" stroke="#999" stroke-width="0.55"/><path d="M474.4 250.05 h12.2 a2.4 2.4 0 0 1 2.4 2.4 v9.1 a2.4 2.4 0 0 1 -2.4 2.4 h-12.2 z" fill="#000" opacity=".05"/><rect x="474.15" y="250.05" width="0.5" height="13.9" fill="#000" opacity=".12"/><path d="M479.09999999999997 260.4 a3.9 3.9 0 1 1 5.2 0" fill="none" stroke="#fff" stroke-width="1.25"/><path d="M481.8 259.6 l1.5 -2.6" stroke="#fff" stroke-width="1"/><text x="470.4" y="259.02" font-size="7.1" fill="#333" font-weight="normal" font-style="normal" text-anchor="end" textLength="19.8" lengthAdjust="spacingAndGlyphs" >Data 1</text><rect x="437.55" y="254.55" width="4.9" height="4.9" rx="1.5" fill="#dedede" stroke="#999" stroke-width="0.5"/><rect x="439.6" y="270.35" width="49.0" height="14.5" rx="2.4" fill="#70c3cb" stroke="#999" stroke-width="0.55"/><path d="M474.0 270.65000000000003 h12.2 a2.4 2.4 0 0 1 2.4 2.4 v9.1 a2.4 2.4 0 0 1 -2.4 2.4 h-12.2 z" fill="#000" opacity=".05"/><rect x="473.75" y="270.65000000000003" width="0.5" height="13.9" fill="#000" opacity=".12"/><path d="M478.7 281.0 a3.9 3.9 0 1 1 5.2 0" fill="none" stroke="#fff" stroke-width="1.25"/><path d="M481.40000000000003 280.20000000000005 l1.5 -2.6" stroke="#fff" stroke-width="1"/><text x="470.0" y="279.62" font-size="7.1" fill="#333" font-weight="normal" font-style="normal" text-anchor="end" textLength="19.8" lengthAdjust="spacingAndGlyphs" >Data 2</text><rect x="437.15" y="275.15" width="4.9" height="4.9" rx="1.5" fill="#dedede" stroke="#999" stroke-width="0.5"/><rect x="440" y="290.1" width="49" height="14.5" rx="2.4" fill="#70c3cb" stroke="#999" stroke-width="0.55"/><path d="M474.4 290.40000000000003 h12.2 a2.4 2.4 0 0 1 2.4 2.4 v9.1 a2.4 2.4 0 0 1 -2.4 2.4 h-12.2 z" fill="#000" opacity=".05"/><rect x="474.15" y="290.40000000000003" width="0.5" height="13.9" fill="#000" opacity=".12"/><path d="M479.09999999999997 300.75 a3.9 3.9 0 1 1 5.2 0" fill="none" stroke="#fff" stroke-width="1.25"/><path d="M481.8 299.95000000000005 l1.5 -2.6" stroke="#fff" stroke-width="1"/><text x="470.4" y="299.37" font-size="7.1" fill="#333" font-weight="normal" font-style="normal" text-anchor="end" textLength="19.8" lengthAdjust="spacingAndGlyphs" >Data 3</text><rect x="437.55" y="294.90" width="4.9" height="4.9" rx="1.5" fill="#dedede" stroke="#999" stroke-width="0.5"/><rect x="438.8" y="312.0" width="49.0" height="14.5" rx="2.4" fill="#70c3cb" stroke="#999" stroke-width="0.55"/><path d="M473.2 312.3 h12.2 a2.4 2.4 0 0 1 2.4 2.4 v9.1 a2.4 2.4 0 0 1 -2.4 2.4 h-12.2 z" fill="#000" opacity=".05"/><rect x="472.95" y="312.3" width="0.5" height="13.9" fill="#000" opacity=".12"/><path d="M477.9 322.65 a3.9 3.9 0 1 1 5.2 0" fill="none" stroke="#fff" stroke-width="1.25"/><path d="M480.6 321.85 l1.5 -2.6" stroke="#fff" stroke-width="1"/><text x="469.2" y="321.27" font-size="7.1" fill="#333" font-weight="normal" font-style="normal" text-anchor="end" textLength="19.8" lengthAdjust="spacingAndGlyphs" >Data 4</text><rect x="436.35" y="316.80" width="4.9" height="4.9" rx="1.5" fill="#dedede" stroke="#999" stroke-width="0.5"/><rect x="439.2" y="331.85" width="49.0" height="14.5" rx="2.4" fill="#70c3cb" stroke="#999" stroke-width="0.55"/><path d="M473.59999999999997 332.15000000000003 h12.2 a2.4 2.4 0 0 1 2.4 2.4 v9.1 a2.4 2.4 0 0 1 -2.4 2.4 h-12.2 z" fill="#000" opacity=".05"/><rect x="473.34999999999997" y="332.15000000000003" width="0.5" height="13.9" fill="#000" opacity=".12"/><path d="M478.29999999999995 342.5 a3.9 3.9 0 1 1 5.2 0" fill="none" stroke="#fff" stroke-width="1.25"/><path d="M481.0 341.70000000000005 l1.5 -2.6" stroke="#fff" stroke-width="1"/><text x="469.59999999999997" y="341.12" font-size="7.1" fill="#333" font-weight="normal" font-style="normal" text-anchor="end" textLength="19.8" lengthAdjust="spacingAndGlyphs" >Data 5</text><rect x="436.75" y="336.65" width="4.9" height="4.9" rx="1.5" fill="#dedede" stroke="#999" stroke-width="0.5"/><rect x="438.2" y="352.3" width="49.0" height="14.5" rx="2.4" fill="#70c3cb" stroke="#999" stroke-width="0.55"/><path d="M472.59999999999997 352.6 h12.2 a2.4 2.4 0 0 1 2.4 2.4 v9.1 a2.4 2.4 0 0 1 -2.4 2.4 h-12.2 z" fill="#000" opacity=".05"/><rect x="472.34999999999997" y="352.6" width="0.5" height="13.9" fill="#000" opacity=".12"/><path d="M477.29999999999995 362.95 a3.9 3.9 0 1 1 5.2 0" fill="none" stroke="#fff" stroke-width="1.25"/><path d="M480.0 362.15000000000003 l1.5 -2.6" stroke="#fff" stroke-width="1"/><text x="468.59999999999997" y="361.57" font-size="7.1" fill="#333" font-weight="normal" font-style="normal" text-anchor="end" textLength="19.8" lengthAdjust="spacingAndGlyphs" >Data 6</text><rect x="435.75" y="357.10" width="4.9" height="4.9" rx="1.5" fill="#dedede" stroke="#999" stroke-width="0.5"/><rect x="438.6" y="372.15" width="49.0" height="14.5" rx="2.4" fill="#70c3cb" stroke="#999" stroke-width="0.55"/><path d="M473.0 372.45 h12.2 a2.4 2.4 0 0 1 2.4 2.4 v9.1 a2.4 2.4 0 0 1 -2.4 2.4 h-12.2 z" fill="#000" opacity=".05"/><rect x="472.75" y="372.45" width="0.5" height="13.9" fill="#000" opacity=".12"/><path d="M477.7 382.79999999999995 a3.9 3.9 0 1 1 5.2 0" fill="none" stroke="#fff" stroke-width="1.25"/><path d="M480.40000000000003 382.0 l1.5 -2.6" stroke="#fff" stroke-width="1"/><text x="469.0" y="381.42" font-size="7.1" fill="#333" font-weight="normal" font-style="normal" text-anchor="end" textLength="19.8" lengthAdjust="spacingAndGlyphs" >Data 7</text><rect x="436.15" y="376.95" width="4.9" height="4.9" rx="1.5" fill="#dedede" stroke="#999" stroke-width="0.5"/></g></svg>
<svg width="834" height="473" viewBox="0 0 834 473" font-family="Liberation Sans, sans-serif"><rect x="664.1" y="100.6" width="10.0" height="322.0" fill="#f1f1f1"/><rect x="664.7" y="118.5" width="8.8" height="40.099999999999994" fill="#c1c1c1"/><path d="M669.1 104.8 l2.1 2.3 h-4.2 z" fill="#505050"/><path d="M669.1 418.20000000000005 l2.1 -2.3 h-4.2 z" fill="#505050"/><rect x="86.7" y="422.6" width="577.4" height="9.399999999999977" fill="#f1f1f1"/><rect x="97.7" y="423.20000000000005" width="130.3" height="8.199999999999978" fill="#c1c1c1"/><path d="M90.3 427.3 l2.3 -2.1 v4.2 z" fill="#505050"/><path d="M659.9 427.3 l-2.3 -2.1 v4.2 z" fill="#505050"/><rect x="664.1" y="422.6" width="10" height="9.4" fill="#dcdcdc"/></svg>
<svg width="834" height="473" viewBox="0 0 834 473" font-family="Liberation Sans, sans-serif"><clipPath id="cp14"><rect x="0" y="100.6" width="86.10000000000001" height="331.6"/></clipPath><g clip-path="url(#cp14)"><rect x="0" y="102.3" width="76.6" height="17.700000000000003" fill="#f3f3f3"/><rect x="0" y="119.75" width="76.6" height="0.5" fill="#ddd"/><path d="M6 110.25 l1.6 1.7 l1.6 -1.7" fill="none" stroke="#777" stroke-width=".75"/><text x="15" y="113.44" font-size="7" fill="#444" font-weight="bold" font-style="normal" text-anchor="start" textLength="29.2" lengthAdjust="spacingAndGlyphs" >subflows</text><rect x="8.2" y="126.4" width="58.7" height="24.0" rx="2.4" fill="#dda596" stroke="#999" stroke-width="0.55"/><path d="M10.6 126.7 h12.799999999999999 v23.4 h-12.799999999999999 a2.4 2.4 0 0 1 -2.4 -2.4 v-18.6 a2.4 2.4 0 0 1 2.4 -2.4 z" fill="#000" opacity=".05"/><rect x="23.15" y="126.7" width="0.5" height="23.4" fill="#000" opacity=".12"/><rect x="12.099999999999998" y="133.70000000000002" width="7.4" height="9.4" fill="#fff" fill-opacity=".35" stroke="#fff" stroke-width=".9"/><path d="M13.399999999999999 140.8 v-4.4 l2 4.4 l1.6 -4.4 v4.4" fill="none" stroke="#fff" stroke-width=".8"/><path d="M13.299999999999999 135.20000000000002 h5" stroke="#fff" stroke-width=".7"/><text x="45.6" y="136.2" font-size="6.2" fill="#505050" font-weight="normal" font-style="normal" text-anchor="middle" textLength="28" lengthAdjust="spacingAndGlyphs" >Lấy dữ từ</text><text x="45.6" y="145.3" font-size="6.2" fill="#505050" font-weight="normal" font-style="normal" text-anchor="middle" textLength="11.5" lengthAdjust="spacingAndGlyphs" >iNut</text><rect x="6.00" y="136.20" width="4.4" height="4.4" rx="1.4" fill="#e4e4e4" stroke="#999" stroke-width="0.5"/><rect x="64.70" y="136.20" width="4.4" height="4.4" rx="1.4" fill="#e4e4e4" stroke="#999" stroke-width="0.5"/><rect x="0" y="155.6" width="76.6" height="0.5" fill="#ddd"/><rect x="0" y="157.7" width="76.6" height="18.5" fill="#f3f3f3"/><rect x="0" y="175.95" width="76.6" height="0.5" fill="#ddd"/><path d="M6 166.04999999999998 l1.6 1.7 l1.6 -1.7" fill="none" stroke="#777" stroke-width=".75"/><text x="15" y="169.24" font-size="7" fill="#444" font-weight="bold" font-style="normal" text-anchor="start" textLength="16.2" lengthAdjust="spacingAndGlyphs" >input</text><rect x="8.2" y="182.6" width="58.7" height="13.9" rx="2.4" fill="#a6bbcf" stroke="#999" stroke-width="0.55"/><path d="M10.6 182.9 h12.799999999999999 v13.3 h-12.799999999999999 a2.4 2.4 0 0 1 -2.4 -2.4 v-8.5 a2.4 2.4 0 0 1 2.4 -2.4 z" fill="#000" opacity=".05"/><rect x="23.15" y="182.9" width="0.5" height="13.3" fill="#000" opacity=".12"/><path d="M12.2 188.15 h4 M12.2 190.95000000000002 h4 M15.999999999999998 185.95000000000002 l3.2 3.6 l-3.2 3.6" fill="none" stroke="#fff" stroke-width="1.4"/><text x="45.6" y="191.82" font-size="6.1" fill="#505050" font-weight="normal" font-style="normal" text-anchor="middle" >inject</text><rect x="64.70" y="187.35" width="4.4" height="4.4" rx="1.4" fill="#e4e4e4" stroke="#999" stroke-width="0.5"/><rect x="8.2" y="202.2" width="58.7" height="13.9" rx="2.4" fill="#e49191" stroke="#999" stroke-width="0.55"/><path d="M10.6 202.5 h12.799999999999999 v13.3 h-12.799999999999999 a2.4 2.4 0 0 1 -2.4 -2.4 v-8.5 a2.4 2.4 0 0 1 2.4 -2.4 z" fill="#000" opacity=".05"/><rect x="23.15" y="202.5" width="0.5" height="13.3" fill="#000" opacity=".12"/><rect x="14.7" y="204.34999999999997" width="2.2" height="6.2" fill="#fff"/><rect x="14.7" y="211.74999999999997" width="2.2" height="1.9" fill="#fff"/><text x="45.6" y="211.42" font-size="6.1" fill="#505050" font-weight="normal" font-style="normal" text-anchor="middle" >catch</text><rect x="64.70" y="206.95" width="4.4" height="4.4" rx="1.4" fill="#e4e4e4" stroke="#999" stroke-width="0.5"/><rect x="8.2" y="222.0" width="58.7" height="13.9" rx="2.4" fill="#c0edc0" stroke="#999" stroke-width="0.55"/><path d="M10.6 222.3 h12.799999999999999 v13.3 h-12.799999999999999 a2.4 2.4 0 0 1 -2.4 -2.4 v-8.5 a2.4 2.4 0 0 1 2.4 -2.4 z" fill="#000" opacity=".05"/><rect x="23.15" y="222.3" width="0.5" height="13.3" fill="#000" opacity=".12"/><rect x="14.7" y="224.14999999999998" width="2.2" height="6.2" fill="#fff"/><rect x="14.7" y="231.54999999999998" width="2.2" height="1.9" fill="#fff"/><text x="45.6" y="231.22" font-size="6.1" fill="#505050" font-weight="normal" font-style="normal" text-anchor="middle" >status</text><rect x="64.70" y="226.75" width="4.4" height="4.4" rx="1.4" fill="#e4e4e4" stroke="#999" stroke-width="0.5"/><rect x="8.2" y="241.3" width="58.7" height="13.9" rx="2.4" fill="#ddd" stroke="#999" stroke-width="0.55"/><path d="M10.6 241.60000000000002 h12.799999999999999 v13.3 h-12.799999999999999 a2.4 2.4 0 0 1 -2.4 -2.4 v-8.5 a2.4 2.4 0 0 1 2.4 -2.4 z" fill="#000" opacity=".05"/><rect x="23.15" y="241.60000000000002" width="0.5" height="13.3" fill="#000" opacity=".12"/><path d="M12.399999999999999 248.25 h3.4 M14.799999999999999 246.25 l2 2 l-2 2" fill="none" stroke="#fff" stroke-width="1"/><circle cx="16.4" cy="248.25" r="2.6" fill="none" stroke="#fff" stroke-width=".7" stroke-dasharray="1.2 .8"/><text x="45.6" y="250.52" font-size="6.1" fill="#505050" font-weight="normal" font-style="normal" text-anchor="middle" >link</text><rect x="64.70" y="246.05" width="4.4" height="4.4" rx="1.4" fill="#e4e4e4" stroke="#999" stroke-width="0.5"/><rect x="8.2" y="260.9" width="58.7" height="13.9" rx="2.4" fill="#d8bfd8" stroke="#999" stroke-width="0.55"/><path d="M10.6 261.2 h12.799999999999999 v13.3 h-12.799999999999999 a2.4 2.4 0 0 1 -2.4 -2.4 v-8.5 a2.4 2.4 0 0 1 2.4 -2.4 z" fill="#000" opacity=".05"/><rect x="23.15" y="261.2" width="0.5" height="13.3" fill="#000" opacity=".12"/><path d="M13.95 266.42499999999995 a1.5 1.6500000000000001 0 0 1 0 2.8499999999999996" fill="none" stroke="#fff" stroke-width=".75" opacity=".95"/><path d="M14.7 264.99999999999994 a3.0 3.3000000000000003 0 0 1 0 5.699999999999999" fill="none" stroke="#fff" stroke-width=".75" opacity=".95"/><path d="M15.45 263.575 a4.5 4.95 0 0 1 0 8.549999999999999" fill="none" stroke="#fff" stroke-width=".75" opacity=".95"/><text x="45.6" y="270.12" font-size="6.1" fill="#505050" font-weight="normal" font-style="normal" text-anchor="middle" >mqtt</text><rect x="64.70" y="265.65" width="4.4" height="4.4" rx="1.4" fill="#e4e4e4" stroke="#999" stroke-width="0.5"/><rect x="8.2" y="280.6" width="58.7" height="13.9" rx="2.4" fill="#e7e7ae" stroke="#999" stroke-width="0.55"/><path d="M10.6 280.90000000000003 h12.799999999999999 v13.3 h-12.799999999999999 a2.4 2.4 0 0 1 -2.4 -2.4 v-8.5 a2.4 2.4 0 0 1 2.4 -2.4 z" fill="#000" opacity=".05"/><rect x="23.15" y="280.90000000000003" width="0.5" height="13.3" fill="#000" opacity=".12"/><path d="M12.2 287.95 c-.4 -2.6 1.6 -4 3.4 -3.6 c2.4 -.6 4.2 1.6 3.4 3.6 c.6 1.8 -1 3 -2.4 2.4 l-.6 1.8 l-1.6 -1.6 c-1.4 .2 -2.4 -1 -2.2 -2.6 z" fill="#fff"/><text x="45.6" y="289.82" font-size="6.1" fill="#505050" font-weight="normal" font-style="normal" text-anchor="middle" >http</text><rect x="64.70" y="285.35" width="4.4" height="4.4" rx="1.4" fill="#e4e4e4" stroke="#999" stroke-width="0.5"/><rect x="8.2" y="300.1" width="58.7" height="13.9" rx="2.4" fill="#e7e7ae" stroke="#999" stroke-width="0.55"/><path d="M10.6 300.40000000000003 h12.799999999999999 v13.3 h-12.799999999999999 a2.4 2.4 0 0 1 -2.4 -2.4 v-8.5 a2.4 2.4 0 0 1 2.4 -2.4 z" fill="#000" opacity=".05"/><rect x="23.15" y="300.40000000000003" width="0.5" height="13.3" fill="#000" opacity=".12"/><path d="M12.2 307.45 c-.4 -2.6 1.6 -4 3.4 -3.6 c2.4 -.6 4.2 1.6 3.4 3.6 c.6 1.8 -1 3 -2.4 2.4 l-.6 1.8 l-1.6 -1.6 c-1.4 .2 -2.4 -1 -2.2 -2.6 z" fill="#fff"/><text x="45.6" y="309.32" font-size="6.1" fill="#505050" font-weight="normal" font-style="normal" text-anchor="middle" >websocket</text><rect x="64.70" y="304.85" width="4.4" height="4.4" rx="1.4" fill="#e4e4e4" stroke="#999" stroke-width="0.5"/><rect x="8.2" y="319.5" width="58.7" height="13.9" rx="2.4" fill="#c0c0c0" stroke="#999" stroke-width="0.55"/><path d="M10.6 319.8 h12.799999999999999 v13.3 h-12.799999999999999 a2.4 2.4 0 0 1 -2.4 -2.4 v-8.5 a2.4 2.4 0 0 1 2.4 -2.4 z" fill="#000" opacity=".05"/><rect x="23.15" y="319.8" width="0.5" height="13.3" fill="#000" opacity=".12"/><path d="M14.999999999999998 321.84999999999997 c2.4 1.6 2.4 3 0 4.6 c-2.4 1.6 -2.4 3 0 4.6 M16.599999999999998 321.84999999999997 c-2.4 1.6 -2.4 3 0 4.6 c2.4 1.6 2.4 3 0 4.6" fill="none" stroke="#fff" stroke-width=".8" opacity=".9"/><text x="45.6" y="328.72" font-size="6.1" fill="#505050" font-weight="normal" font-style="normal" text-anchor="middle" >tcp</text><rect x="64.70" y="324.25" width="4.4" height="4.4" rx="1.4" fill="#e4e4e4" stroke="#999" stroke-width="0.5"/><rect x="8.2" y="339.0" width="58.7" height="13.9" rx="2.4" fill="#c0c0c0" stroke="#999" stroke-width="0.55"/><path d="M10.6 339.3 h12.799999999999999 v13.3 h-12.799999999999999 a2.4 2.4 0 0 1 -2.4 -2.4 v-8.5 a2.4 2.4 0 0 1 2.4 -2.4 z" fill="#000" opacity=".05"/><rect x="23.15" y="339.3" width="0.5" height="13.3" fill="#000" opacity=".12"/><path d="M14.999999999999998 341.34999999999997 c2.4 1.6 2.4 3 0 4.6 c-2.4 1.6 -2.4 3 0 4.6 M16.599999999999998 341.34999999999997 c-2.4 1.6 -2.4 3 0 4.6 c2.4 1.6 2.4 3 0 4.6" fill="none" stroke="#fff" stroke-width=".8" opacity=".9"/><text x="45.6" y="348.22" font-size="6.1" fill="#505050" font-weight="normal" font-style="normal" text-anchor="middle" >udp</text><rect x="64.70" y="343.75" width="4.4" height="4.4" rx="1.4" fill="#e4e4e4" stroke="#999" stroke-width="0.5"/><rect x="8.2" y="358.7" width="58.7" height="13.9" rx="2.4" fill="#d8bfd8" stroke="#999" stroke-width="0.55"/><path d="M10.6 359.0 h12.799999999999999 v13.3 h-12.799999999999999 a2.4 2.4 0 0 1 -2.4 -2.4 v-8.5 a2.4 2.4 0 0 1 2.4 -2.4 z" fill="#000" opacity=".05"/><rect x="23.15" y="359.0" width="0.5" height="13.3" fill="#000" opacity=".12"/><circle cx="15.799999999999999" cy="365.25" r="3.6" fill="none" stroke="#fff" stroke-width=".8"/><path d="M14.799999999999999 366.25 l-1.6 3 M16.799999999999997 366.25 l1.6 3 M15.799999999999999 364.45 v-2.6" stroke="#fff" stroke-width=".8"/><circle cx="15.799999999999999" cy="365.25" r="1.2" fill="#fff"/><text x="45.6" y="367.92" font-size="6.1" fill="#505050" font-weight="normal" font-style="normal" text-anchor="middle" >mosca</text><rect x="64.70" y="363.45" width="4.4" height="4.4" rx="1.4" fill="#e4e4e4" stroke="#999" stroke-width="0.5"/><rect x="0" y="378.6" width="76.6" height="0.5" fill="#ddd"/><rect x="0" y="380.7" width="76.6" height="17.600000000000023" fill="#f3f3f3"/><rect x="0" y="398.05" width="76.6" height="0.5" fill="#ddd"/><path d="M6 388.6 l1.6 1.7 l1.6 -1.7" fill="none" stroke="#777" stroke-width=".75"/><text x="15" y="391.79" font-size="7" fill="#444" font-weight="bold" font-style="normal" text-anchor="start" textLength="21.5" lengthAdjust="spacingAndGlyphs" >output</text><rect x="8.2" y="405" width="58.7" height="14.2" rx="2.4" fill="#87a980" stroke="#999" stroke-width="0.55"/><path d="M51.7 405.3 h12.799999999999999 a2.4 2.4 0 0 1 2.4 2.4 v8.8 a2.4 2.4 0 0 1 -2.4 2.4 h-12.799999999999999 z" fill="#000" opacity=".05"/><rect x="51.45" y="405.3" width="0.5" height="13.6" fill="#000" opacity=".12"/><rect x="57.1" y="408.0" width="4.4" height="1" fill="#fff" opacity=".9"/><rect x="57.1" y="409.9" width="4.4" height="1" fill="#fff" opacity=".9"/><rect x="57.1" y="411.8" width="4.4" height="1" fill="#fff" opacity=".9"/><rect x="57.1" y="413.7" width="4.4" height="1" fill="#fff" opacity=".9"/><rect x="57.1" y="415.6" width="4.4" height="1" fill="#fff" opacity=".9"/><text x="30.4" y="414.37" font-size="6.1" fill="#505050" font-weight="normal" font-style="normal" text-anchor="middle" >debug</text><rect x="6.00" y="409.90" width="4.4" height="4.4" rx="1.4" fill="#e4e4e4" stroke="#999" stroke-width="0.5"/><rect x="8.2" y="424.6" width="58.7" height="14.0" rx="2.4" fill="#ddd" stroke="#999" stroke-width="0.55"/><path d="M51.7 424.90000000000003 h12.799999999999999 a2.4 2.4 0 0 1 2.4 2.4 v8.6 a2.4 2.4 0 0 1 -2.4 2.4 h-12.799999999999999 z" fill="#000" opacity=".05"/><rect x="51.45" y="424.90000000000003" width="0.5" height="13.4" fill="#000" opacity=".12"/><path d="M55.900000000000006 431.6 h3.4 M58.300000000000004 429.6 l2 2 l-2 2" fill="none" stroke="#fff" stroke-width="1"/><circle cx="59.900000000000006" cy="431.6" r="2.6" fill="none" stroke="#fff" stroke-width=".7" stroke-dasharray="1.2 .8"/><text x="30.4" y="433.87" font-size="6.1" fill="#505050" font-weight="normal" font-style="normal" text-anchor="middle" >link</text><rect x="6.00" y="429.40" width="4.4" height="4.4" rx="1.4" fill="#e4e4e4" stroke="#999" stroke-width="0.5"/></g></svg>
<svg width="834" height="473" viewBox="0 0 834 473" font-family="Liberation Sans, sans-serif"><rect x="76.6" y="100.6" width="9.5" height="331.59999999999997" fill="#fff"/><rect x="77" y="100.89999999999999" width="8.200000000000003" height="331.3" fill="#f4f4f4"/><rect x="77.6" y="111.7" width="7.000000000000003" height="41.499999999999986" fill="#c1c1c1"/><path d="M81.1 105.1 l2.1 2.3 h-4.2 z" fill="#a3a3a3"/><path d="M81.1 427.8 l2.1 -2.3 h-4.2 z" fill="#505050"/></svg>
<div class="a" style="left:678.9px;top:82.8px;width:153.2px;height:17.5px;background:#fff;"></div>
<div class="a" style="left:678.9px;top:431.6px;width:153.2px;height:14.0px;background:#f3f3f3;border-top:0.6px solid #ccc;box-sizing:border-box"></div>
<svg width="834" height="473" viewBox="0 0 834 473" font-family="Liberation Sans, sans-serif"><rect x="678.6" y="100.0" width="153.19999999999993" height="0.6" fill="#bbb"/><path d="M680 100.0 V85.6 H714.6 V100.0" fill="#f0f0f0" stroke="#bbb" stroke-width="0.6"/><text x="686.4" y="95.15" font-size="6.9" fill="#717171" font-weight="normal" font-style="normal" text-anchor="start" textLength="9.4" lengthAdjust="spacingAndGlyphs" >info</text><path d="M718.3 100.0 V85.6 H752.9 V100.0" fill="#f0f0f0" stroke="#bbb" stroke-width="0.6"/><text x="724.2" y="95.15" font-size="6.9" fill="#717171" font-weight="normal" font-style="normal" text-anchor="start" textLength="19.4" lengthAdjust="spacingAndGlyphs" >history</text><path d="M755.5 100.0 V85.6 H789.6 V100.0" fill="#f0f0f0" stroke="#bbb" stroke-width="0.6"/><text x="762" y="95.15" font-size="6.9" fill="#717171" font-weight="normal" font-style="normal" text-anchor="start" textLength="18.3" lengthAdjust="spacingAndGlyphs" >debug</text><path d="M793.3 100.7 V85.6 H827 V100.7" fill="#fff" stroke="#bbb" stroke-width="0.6"/><rect x="793.5999999999999" y="99.8" width="33.100000000000044" height="1.2" fill="#fff"/><text x="799.1" y="95.15" font-size="6.9" fill="#333" font-weight="bold" font-style="normal" text-anchor="start" textLength="17.3" lengthAdjust="spacingAndGlyphs" >dashl</text><path d="M820 91 l2.6 3 M822.6 91 l-2.6 3 M824.4 91.2 v2.8" stroke="#bbb" stroke-width=".6" fill="none"/><rect x="685" y="122.9" width="131" height="0.6" fill="#bbb"/><path d="M685.9 123.60000000000001 V108.1 H720.2 V123.60000000000001" fill="#fff" stroke="#bbb" stroke-width="0.6"/><rect x="686.1999999999999" y="122.7" width="33.70000000000007" height="1.2" fill="#fff"/><text x="692.2" y="117.75" font-size="6.9" fill="#333" font-weight="normal" font-style="normal" text-anchor="start" textLength="22.3" lengthAdjust="spacingAndGlyphs" >Layout</text><path d="M723.2 122.9 V108.1 H756.9 V122.9" fill="#f0f0f0" stroke="#bbb" stroke-width="0.6"/><text x="729.9" y="117.75" font-size="6.9" fill="#717171" font-weight="normal" font-style="normal" text-anchor="start" textLength="10.8" lengthAdjust="spacingAndGlyphs" >Site</text><path d="M760.1 122.9 V108.1 H794 V122.9" fill="#f0f0f0" stroke="#bbb" stroke-width="0.6"/><text x="766.4" y="117.75" font-size="6.9" fill="#717171" font-weight="normal" font-style="normal" text-anchor="start" textLength="20.6" lengthAdjust="spacingAndGlyphs" >Theme</text><path d="M810 112.6 h-3.2 v5 h5 v-3" fill="none" stroke="#999" stroke-width=".7"/><path d="M809 115.4 l3.2 -3.2 M810.4 112 h2 v2" fill="none" stroke="#999" stroke-width=".7"/><text x="684" y="138.35" font-size="6.9" fill="#444" font-weight="bold" font-style="normal" text-anchor="start" textLength="41.9" lengthAdjust="spacingAndGlyphs" >Tabs &amp; Links</text><rect x="751.6" y="132.7" width="9.5" height="8.3" rx=".8" fill="#fff" stroke="#ccc" stroke-width="0.6"/><rect x="764" y="132.7" width="9.5" height="8.3" rx=".8" fill="#fff" stroke="#ccc" stroke-width="0.6"/><rect x="776.3" y="132.7" width="16.8" height="8.3" rx=".8" fill="#fff" stroke="#ccc" stroke-width="0.6"/><rect x="796.3" y="132.7" width="17.1" height="8.3" rx=".8" fill="#fff" stroke="#ccc" stroke-width="0.6"/><path d="M755 137.6 l1.4 -1.5 l1.4 1.5" fill="none" stroke="#aaa" stroke-width=".6"/><path d="M767.4 136.2 l1.4 1.5 l1.4 -1.5" fill="none" stroke="#aaa" stroke-width=".6"/><path d="M778.6 136.9 h3 M780.1 135.4 v3" stroke="#666" stroke-width=".9"/><text x="782.6" y="138.74" font-size="4.9" fill="#999" font-weight="normal" font-style="normal" text-anchor="start" textLength="7.2" lengthAdjust="spacingAndGlyphs" >tab</text><path d="M798.6 136.9 h3 M800.1 135.4 v3" stroke="#666" stroke-width=".9"/><text x="802.6" y="138.74" font-size="4.9" fill="#999" font-weight="normal" font-style="normal" text-anchor="start" textLength="8" lengthAdjust="spacingAndGlyphs" >link</text></svg>
<svg width="834" height="473" viewBox="0 0 834 473" font-family="Liberation Sans, sans-serif"><clipPath id="cp19"><rect x="679.1" y="143.3" width="141.89999999999998" height="288.2"/></clipPath><g clip-path="url(#cp19)"><rect x="684.0" y="143.8" width="131.29999999999995" height="291.7" fill="#fff" stroke="#ccc" stroke-width="0.6"/><rect x="684.3" y="143.8" width="121.09999999999998" height="15.5" fill="#efefef"/><path d="M700.2 150.25 l1.5 1.6 l1.5 -1.6" fill="none" stroke="#555" stroke-width=".85"/><rect x="707.9" y="148.05" width="7" height="5.6" fill="none" stroke="#555" stroke-width=".7"/><path d="M707.0 148.05 h2.4 M707.0 153.65000000000003 h2.4 M713.4 148.05 h2.4 M713.4 153.65000000000003 h2.4 M711.4 148.05 v-1.2 M711.4 153.65000000000003 v1.2" stroke="#555" stroke-width=".7"/><rect x="710.1" y="149.85000000000002" width="2.6" height="2" fill="#555"/><text x="720.7" y="153.4" font-size="6.9" fill="#444" font-weight="normal" font-style="normal" text-anchor="start" textLength="70.8" lengthAdjust="spacingAndGlyphs" >Kiểm thử iNut cảm biến</text><rect x="684.3" y="159.05" width="121.09999999999998" height="0.5" fill="#e6e6e6"/><path d="M709.4 164.95 l1.6 1.5 l-1.6 1.5" fill="none" stroke="#555" stroke-width=".85"/><rect x="716.1" y="163.75000000000003" width="6.8" height="5.2" rx=".9" fill="#5c5c5c"/><path d="M717.65 165.15000000000003 v3 M719.5 165.15000000000003 v3 M721.35 165.15000000000003 v3" stroke="#ddd" stroke-width="1.1"/><text x="728.4" y="168.9" font-size="6.9" fill="#444" font-weight="normal" font-style="normal" text-anchor="start" textLength="26.6" lengthAdjust="spacingAndGlyphs" >Thứ nhất</text><rect x="684.3" y="174.55" width="121.09999999999998" height="0.5" fill="#e6e6e6"/><path d="M709.4 180.45 l1.6 1.5 l-1.6 1.5" fill="none" stroke="#555" stroke-width=".85"/><rect x="716.1" y="179.25000000000003" width="6.8" height="5.2" rx=".9" fill="#5c5c5c"/><path d="M717.65 180.65000000000003 v3 M719.5 180.65000000000003 v3 M721.35 180.65000000000003 v3" stroke="#ddd" stroke-width="1.1"/><text x="728.4" y="184.4" font-size="6.9" fill="#444" font-weight="normal" font-style="normal" text-anchor="start" textLength="17.1" lengthAdjust="spacingAndGlyphs" >Thứ 2</text><rect x="684.3" y="190.05" width="121.09999999999998" height="0.5" fill="#e6e6e6"/><rect x="684.3" y="190.3" width="121.09999999999998" height="15.5" fill="#efefef"/><path d="M700.2 196.75 l1.5 1.6 l1.5 -1.6" fill="none" stroke="#555" stroke-width=".85"/><rect x="707.9" y="194.55" width="7" height="5.6" fill="none" stroke="#555" stroke-width=".7"/><path d="M707.0 194.55 h2.4 M707.0 200.15000000000003 h2.4 M713.4 194.55 h2.4 M713.4 200.15000000000003 h2.4 M711.4 194.55 v-1.2 M711.4 200.15000000000003 v1.2" stroke="#555" stroke-width=".7"/><rect x="710.1" y="196.35000000000002" width="2.6" height="2" fill="#555"/><text x="720.7" y="199.9" font-size="6.9" fill="#444" font-weight="normal" font-style="normal" text-anchor="start" textLength="70.8" lengthAdjust="spacingAndGlyphs" >Kiểm thử iNut cảm biến</text><rect x="684.3" y="205.55" width="121.09999999999998" height="0.5" fill="#e6e6e6"/><path d="M709.4 211.45 l1.6 1.5 l-1.6 1.5" fill="none" stroke="#555" stroke-width=".85"/><rect x="716.1" y="210.25000000000003" width="6.8" height="5.2" rx=".9" fill="#5c5c5c"/><path d="M717.65 211.65000000000003 v3 M719.5 211.65000000000003 v3 M721.35 211.65000000000003 v3" stroke="#ddd" stroke-width="1.1"/><text x="728.4" y="215.4" font-size="6.9" fill="#444" font-weight="normal" font-style="normal" text-anchor="start" textLength="26.6" lengthAdjust="spacingAndGlyphs" >Thứ nhất</text><rect x="684.3" y="221.05" width="121.09999999999998" height="0.5" fill="#e6e6e6"/><path d="M709.4 226.95 l1.6 1.5 l-1.6 1.5" fill="none" stroke="#555" stroke-width=".85"/><rect x="716.1" y="225.75000000000003" width="6.8" height="5.2" rx=".9" fill="#5c5c5c"/><path d="M717.65 227.15000000000003 v3 M719.5 227.15000000000003 v3 M721.35 227.15000000000003 v3" stroke="#ddd" stroke-width="1.1"/><text x="728.4" y="230.9" font-size="6.9" fill="#444" font-weight="normal" font-style="normal" text-anchor="start" textLength="17.1" lengthAdjust="spacingAndGlyphs" >Thứ 2</text><rect x="684.3" y="236.55" width="121.09999999999998" height="0.5" fill="#e6e6e6"/><rect x="684.3" y="236.8" width="121.09999999999998" height="15.5" fill="#efefef"/><path d="M700.2 243.25 l1.5 1.6 l1.5 -1.6" fill="none" stroke="#555" stroke-width=".85"/><rect x="707.9" y="241.05" width="7" height="5.6" fill="none" stroke="#555" stroke-width=".7"/><path d="M707.0 241.05 h2.4 M707.0 246.65000000000003 h2.4 M713.4 241.05 h2.4 M713.4 246.65000000000003 h2.4 M711.4 241.05 v-1.2 M711.4 246.65000000000003 v1.2" stroke="#555" stroke-width=".7"/><rect x="710.1" y="242.85000000000002" width="2.6" height="2" fill="#555"/><text x="720.7" y="246.4" font-size="6.9" fill="#444" font-weight="normal" font-style="normal" text-anchor="start" textLength="70.8" lengthAdjust="spacingAndGlyphs" >Kiểm thử iNut cảm biến</text><rect x="684.3" y="252.05" width="121.09999999999998" height="0.5" fill="#e6e6e6"/><path d="M709.4 257.95 l1.6 1.5 l-1.6 1.5" fill="none" stroke="#555" stroke-width=".85"/><rect x="716.1" y="256.75" width="6.8" height="5.2" rx=".9" fill="#5c5c5c"/><path d="M717.65 258.15000000000003 v3 M719.5 258.15000000000003 v3 M721.35 258.15000000000003 v3" stroke="#ddd" stroke-width="1.1"/><text x="728.4" y="261.9" font-size="6.9" fill="#444" font-weight="normal" font-style="normal" text-anchor="start" textLength="26.6" lengthAdjust="spacingAndGlyphs" >Thứ nhất</text><rect x="684.3" y="267.55" width="121.09999999999998" height="0.5" fill="#e6e6e6"/><path d="M709.4 273.45 l1.6 1.5 l-1.6 1.5" fill="none" stroke="#555" stroke-width=".85"/><rect x="716.1" y="272.25" width="6.8" height="5.2" rx=".9" fill="#5c5c5c"/><path d="M717.65 273.65000000000003 v3 M719.5 273.65000000000003 v3 M721.35 273.65000000000003 v3" stroke="#ddd" stroke-width="1.1"/><text x="728.4" y="277.4" font-size="6.9" fill="#444" font-weight="normal" font-style="normal" text-anchor="start" textLength="17.1" lengthAdjust="spacingAndGlyphs" >Thứ 2</text><rect x="684.3" y="283.05" width="121.09999999999998" height="0.5" fill="#e6e6e6"/><rect x="684.3" y="283.3" width="121.09999999999998" height="15.5" fill="#efefef"/><path d="M700.2 289.75 l1.5 1.6 l1.5 -1.6" fill="none" stroke="#555" stroke-width=".85"/><rect x="707.9" y="287.55" width="7" height="5.6" fill="none" stroke="#555" stroke-width=".7"/><path d="M707.0 287.55 h2.4 M707.0 293.15000000000003 h2.4 M713.4 287.55 h2.4 M713.4 293.15000000000003 h2.4 M711.4 287.55 v-1.2 M711.4 293.15000000000003 v1.2" stroke="#555" stroke-width=".7"/><rect x="710.1" y="289.35" width="2.6" height="2" fill="#555"/><text x="720.7" y="292.9" font-size="6.9" fill="#444" font-weight="normal" font-style="normal" text-anchor="start" textLength="70.8" lengthAdjust="spacingAndGlyphs" >Kiểm thử iNut cảm biến</text><rect x="684.3" y="298.55" width="121.09999999999998" height="0.5" fill="#e6e6e6"/><path d="M709.4 304.45 l1.6 1.5 l-1.6 1.5" fill="none" stroke="#555" stroke-width=".85"/><rect x="716.1" y="303.25" width="6.8" height="5.2" rx=".9" fill="#5c5c5c"/><path d="M717.65 304.65000000000003 v3 M719.5 304.65000000000003 v3 M721.35 304.65000000000003 v3" stroke="#ddd" stroke-width="1.1"/><text x="728.4" y="308.4" font-size="6.9" fill="#444" font-weight="normal" font-style="normal" text-anchor="start" textLength="26.6" lengthAdjust="spacingAndGlyphs" >Thứ nhất</text><rect x="684.3" y="314.05" width="121.09999999999998" height="0.5" fill="#e6e6e6"/><path d="M709.4 319.95 l1.6 1.5 l-1.6 1.5" fill="none" stroke="#555" stroke-width=".85"/><rect x="716.1" y="318.75" width="6.8" height="5.2" rx=".9" fill="#5c5c5c"/><path d="M717.65 320.15000000000003 v3 M719.5 320.15000000000003 v3 M721.35 320.15000000000003 v3" stroke="#ddd" stroke-width="1.1"/><text x="728.4" y="323.9" font-size="6.9" fill="#444" font-weight="normal" font-style="normal" text-anchor="start" textLength="17.1" lengthAdjust="spacingAndGlyphs" >Thứ 2</text><rect x="684.3" y="329.55" width="121.09999999999998" height="0.5" fill="#e6e6e6"/><rect x="684.3" y="329.8" width="121.09999999999998" height="15.5" fill="#efefef"/><path d="M700.2 336.25 l1.5 1.6 l1.5 -1.6" fill="none" stroke="#555" stroke-width=".85"/><rect x="707.9" y="334.05" width="7" height="5.6" fill="none" stroke="#555" stroke-width=".7"/><path d="M707.0 334.05 h2.4 M707.0 339.65000000000003 h2.4 M713.4 334.05 h2.4 M713.4 339.65000000000003 h2.4 M711.4 334.05 v-1.2 M711.4 339.65000000000003 v1.2" stroke="#555" stroke-width=".7"/><rect x="710.1" y="335.85" width="2.6" height="2" fill="#555"/><text x="720.7" y="339.4" font-size="6.9" fill="#444" font-weight="normal" font-style="normal" text-anchor="start" textLength="70.8" lengthAdjust="spacingAndGlyphs" >Kiểm thử iNut cảm biến</text><rect x="684.3" y="345.05" width="121.09999999999998" height="0.5" fill="#e6e6e6"/><path d="M709.4 350.95 l1.6 1.5 l-1.6 1.5" fill="none" stroke="#555" stroke-width=".85"/><rect x="716.1" y="349.75" width="6.8" height="5.2" rx=".9" fill="#5c5c5c"/><path d="M717.65 351.15000000000003 v3 M719.5 351.15000000000003 v3 M721.35 351.15000000000003 v3" stroke="#ddd" stroke-width="1.1"/><text x="728.4" y="354.9" font-size="6.9" fill="#444" font-weight="normal" font-style="normal" text-anchor="start" textLength="26.6" lengthAdjust="spacingAndGlyphs" >Thứ nhất</text><rect x="684.3" y="360.55" width="121.09999999999998" height="0.5" fill="#e6e6e6"/><path d="M709.4 366.45 l1.6 1.5 l-1.6 1.5" fill="none" stroke="#555" stroke-width=".85"/><rect x="716.1" y="365.25" width="6.8" height="5.2" rx=".9" fill="#5c5c5c"/><path d="M717.65 366.65000000000003 v3 M719.5 366.65000000000003 v3 M721.35 366.65000000000003 v3" stroke="#ddd" stroke-width="1.1"/><text x="728.4" y="370.4" font-size="6.9" fill="#444" font-weight="normal" font-style="normal" text-anchor="start" textLength="17.1" lengthAdjust="spacingAndGlyphs" >Thứ 2</text><rect x="684.3" y="376.05" width="121.09999999999998" height="0.5" fill="#e6e6e6"/><rect x="684.3" y="376.3" width="121.09999999999998" height="15.5" fill="#efefef"/><path d="M700.2 382.75 l1.5 1.6 l1.5 -1.6" fill="none" stroke="#555" stroke-width=".85"/><rect x="707.9" y="380.55" width="7" height="5.6" fill="none" stroke="#555" stroke-width=".7"/><path d="M707.0 380.55 h2.4 M707.0 386.15000000000003 h2.4 M713.4 380.55 h2.4 M713.4 386.15000000000003 h2.4 M711.4 380.55 v-1.2 M711.4 386.15000000000003 v1.2" stroke="#555" stroke-width=".7"/><rect x="710.1" y="382.35" width="2.6" height="2" fill="#555"/><text x="720.7" y="385.9" font-size="6.9" fill="#444" font-weight="normal" font-style="normal" text-anchor="start" textLength="70.8" lengthAdjust="spacingAndGlyphs" >Kiểm thử iNut cảm biến</text><rect x="684.3" y="391.55" width="121.09999999999998" height="0.5" fill="#e6e6e6"/><path d="M709.4 397.45 l1.6 1.5 l-1.6 1.5" fill="none" stroke="#555" stroke-width=".85"/><rect x="716.1" y="396.25" width="6.8" height="5.2" rx=".9" fill="#5c5c5c"/><path d="M717.65 397.65000000000003 v3 M719.5 397.65000000000003 v3 M721.35 397.65000000000003 v3" stroke="#ddd" stroke-width="1.1"/><text x="728.4" y="401.4" font-size="6.9" fill="#444" font-weight="normal" font-style="normal" text-anchor="start" textLength="26.6" lengthAdjust="spacingAndGlyphs" >Thứ nhất</text><rect x="684.3" y="407.05" width="121.09999999999998" height="0.5" fill="#e6e6e6"/><path d="M709.4 412.95 l1.6 1.5 l-1.6 1.5" fill="none" stroke="#555" stroke-width=".85"/><rect x="716.1" y="411.75" width="6.8" height="5.2" rx=".9" fill="#5c5c5c"/><path d="M717.65 413.15000000000003 v3 M719.5 413.15000000000003 v3 M721.35 413.15000000000003 v3" stroke="#ddd" stroke-width="1.1"/><text x="728.4" y="416.9" font-size="6.9" fill="#444" font-weight="normal" font-style="normal" text-anchor="start" textLength="17.1" lengthAdjust="spacingAndGlyphs" >Thứ 2</text><rect x="684.3" y="422.55" width="121.09999999999998" height="0.5" fill="#e6e6e6"/><rect x="684.3" y="422.8" width="121.09999999999998" height="15.5" fill="#efefef"/><path d="M700.2 429.25 l1.5 1.6 l1.5 -1.6" fill="none" stroke="#555" stroke-width=".85"/><rect x="707.9" y="427.05" width="7" height="5.6" fill="none" stroke="#555" stroke-width=".7"/><path d="M707.0 427.05 h2.4 M707.0 432.65000000000003 h2.4 M713.4 427.05 h2.4 M713.4 432.65000000000003 h2.4 M711.4 427.05 v-1.2 M711.4 432.65000000000003 v1.2" stroke="#555" stroke-width=".7"/><rect x="710.1" y="428.85" width="2.6" height="2" fill="#555"/><text x="720.7" y="432.4" font-size="6.9" fill="#444" font-weight="normal" font-style="normal" text-anchor="start" textLength="70.8" lengthAdjust="spacingAndGlyphs" >Kiểm thử iNut cảm biến</text><rect x="684.3" y="438.05" width="121.09999999999998" height="0.5" fill="#e6e6e6"/><rect x="805.4" y="144.10000000000002" width="9.6" height="287.7" fill="#fbfbfb"/><rect x="805.4" y="144.10000000000002" width="9.6" height="15.2" fill="#efefef"/><path d="M810.8 148 l2 2.2 h-4 z" fill="#a3a3a3"/></g></svg>
<svg width="834" height="473" viewBox="0 0 834 473" font-family="Liberation Sans, sans-serif"><rect x="822.3" y="100.7" width="8.400000000000091" height="330.8" fill="#f1f1f1"/><rect x="822.9" y="111.8" width="7.200000000000091" height="243.8" fill="#c1c1c1"/><path d="M826.5 104.9 l2.1 2.3 h-4.2 z" fill="#a3a3a3"/><path d="M826.5 427.1 l2.1 -2.3 h-4.2 z" fill="#505050"/></svg>
<div class="a" style="left:0px;top:445.6px;width:831.8px;height:23.8px;background:#2d2926;"></div>
<div class="a" style="left:28.4px;top:445.6px;width:208.8px;height:23.8px;background:#f3f3f3;"></div>
<svg width="834" height="473" viewBox="0 0 834 473" font-family="Liberation Sans, sans-serif"><path d="M8.6 453.6 L13 453 V457.8 H8.6 z M13.7 452.9 L19.3 452.2 V457.8 H13.7 z M8.6 458.5 H13 V463 L8.6 462.4 z M13.7 458.5 H19.3 V463.9 L13.7 463.1 z" fill="#fff"/><circle cx="42.3" cy="456.2" r="2.7" fill="none" stroke="#333" stroke-width=".9"/><path d="M40.4 458.2 l-3.6 3.8" stroke="#333" stroke-width=".95"/><text x="53.3" y="461.67" font-size="9.2" fill="#3a3a3a" font-weight="normal" font-style="normal" text-anchor="start" textLength="77.6" lengthAdjust="spacingAndGlyphs" >Type here to search</text><circle cx="252.5" cy="457.9" r="3.7" fill="none" stroke="#fff" stroke-width="1.3"/><rect x="279.4" y="454.6" width="4.6" height="6.4" fill="none" stroke="#fff" stroke-width=".9"/><path d="M277.6 453.4 v1.6 M277.6 460.6 v1.6 M277.6 456.4 v3 M286.3 453.6 v1.2 M286.3 456.4 v5.6" stroke="#fff" stroke-width=".9"/><path d="M306.8 452.4 h4.6 l1 1.2 h7.2 v9.8 h-12.8 z" fill="#e8b93c"/><rect x="306.8" y="455.2" width="12.8" height="8.2" fill="#f8d872"/><rect x="309.6" y="459" width="7.2" height="4.4" fill="#3b8fd6"/><rect x="311.2" y="461.2" width="4" height="2.2" fill="#f8d872"/><rect x="328.6" y="445.6" width="28.8" height="23.799999999999955" fill="#55514c"/><circle cx="343" cy="458" r="6" fill="#db4437"/><path d="M343 458 L337.8 461 A6 6 0 0 0 343 464 L346 458.9 z" fill="#0f9d58"/><path d="M343 458 L337.8 461 A6 6 0 0 1 337.8 455 z" fill="#0f9d58" opacity="0"/><path d="M343 464 A6 6 0 0 0 348.2 455 L343 455 L345.6 459.5 z" fill="#ffcd40"/><path d="M337.8 455 A6 6 0 0 0 343 464 L345.6 459.5 L340.4 459.5 z" fill="#0f9d58"/><path d="M337.8 455 A6 6 0 0 1 348.2 455 L343 455 z" fill="#db4437"/><circle cx="343" cy="458" r="2.9" fill="#fff"/><circle cx="343" cy="458" r="2.2" fill="#4285f4"/><rect x="369" y="452.4" width="10.6" height="11.2" rx=".8" fill="#2b7cd3"/><rect x="369" y="458" width="10.6" height="5.6" fill="#185abd" opacity=".8"/><rect x="365.4" y="454.6" width="7.4" height="7" rx=".6" fill="#185abd"/><text x="369.1" y="460.05" font-size="5.2" fill="#fff" font-weight="bold" font-style="normal" text-anchor="middle" >W</text><circle cx="400.3" cy="458" r="6" fill="#11999e"/><path d="M400.3 458 c-1.4 -2.4 -4 -2.4 -4 0 s2.6 2.4 4 0 s4 -2.4 4 0 s-2.6 2.4 -4 0" fill="none" stroke="#fff" stroke-width="1.1"/><rect x="425.4" y="452.6" width="13.2" height="10.6" fill="#0c0c0c" stroke="#bbb" stroke-width=".5"/><rect x="425.4" y="452.6" width="13.2" height="1.5" fill="#ddd"/><path d="M427 456 l1.4 1 l-1.4 1 M429.4 458.2 h2" stroke="#ddd" stroke-width=".5" fill="none"/><rect x="300.4" y="468.4" width="25.600000000000023" height="1" fill="#8cc4ee"/><rect x="328.6" y="468.4" width="28.799999999999955" height="1" fill="#8cc4ee"/><rect x="360.6" y="468.4" width="23.399999999999977" height="1" fill="#8cc4ee"/><rect x="390" y="468.4" width="23" height="1" fill="#8cc4ee"/><rect x="420" y="468.4" width="23.600000000000023" height="1" fill="#8cc4ee"/><path d="M684.2 460 l3.6 -3.6 l3.6 3.6" fill="none" stroke="#fff" stroke-width=".9"/><path d="M700 461.4 L706.6 454.6 V461.4 z" fill="#777"/><path d="M701.4 460.2 a5 5 0 0 1 4.6 -4.8 M702.8 460.8 a3 3 0 0 1 3 -3.2" fill="none" stroke="#fff" stroke-width=".8"/><circle cx="705.4" cy="460.4" r=".9" fill="#fff"/><path d="M711.6 456.6 h1.8 l2.4 -2.2 v7.2 l-2.4 -2.2 h-1.8 z" fill="none" stroke="#fff" stroke-width=".8"/><path d="M717.2 456 a3 3 0 0 1 0 4 M718.8 454.6 a5 5 0 0 1 0 6.8" fill="none" stroke="#fff" stroke-width=".7"/><rect x="728" y="456" width="8.2" height="4.6" fill="#fff"/><rect x="736.2" y="457.4" width=".9" height="1.8" fill="#fff"/><path d="M726.4 455 h3 v1.6" fill="none" stroke="#fff" stroke-width=".8"/><text x="742.7" y="460.53" font-size="7.7" fill="#fff" font-weight="normal" font-style="normal" text-anchor="start" textLength="13.4" lengthAdjust="spacingAndGlyphs" >ENG</text><text x="767.7" y="455.37" font-size="7.8" fill="#fff" font-weight="normal" font-style="normal" text-anchor="start" textLength="25.3" lengthAdjust="spacingAndGlyphs" >8:46 PM</text><text x="764.6" y="465.87" font-size="7.8" fill="#fff" font-weight="normal" font-style="normal" text-anchor="start" textLength="31.3" lengthAdjust="spacingAndGlyphs" >4/14/2020</text><path d="M807.6 453 h9.2 v6.6 h-6.4 l-1.4 1.4 v-1.4 h-1.4 z" fill="#fff"/><path d="M809.4 455.2 h5.6 M809.4 457 h5.6" stroke="#999" stroke-width=".6"/><circle cx="816.5" cy="462" r="4.6" fill="#2d2926" stroke="#fff" stroke-width=".7"/><text x="816.5" y="464.34" font-size="6.3" fill="#fff" font-weight="bold" font-style="normal" text-anchor="middle" >22</text></svg>
</div></body></html>
